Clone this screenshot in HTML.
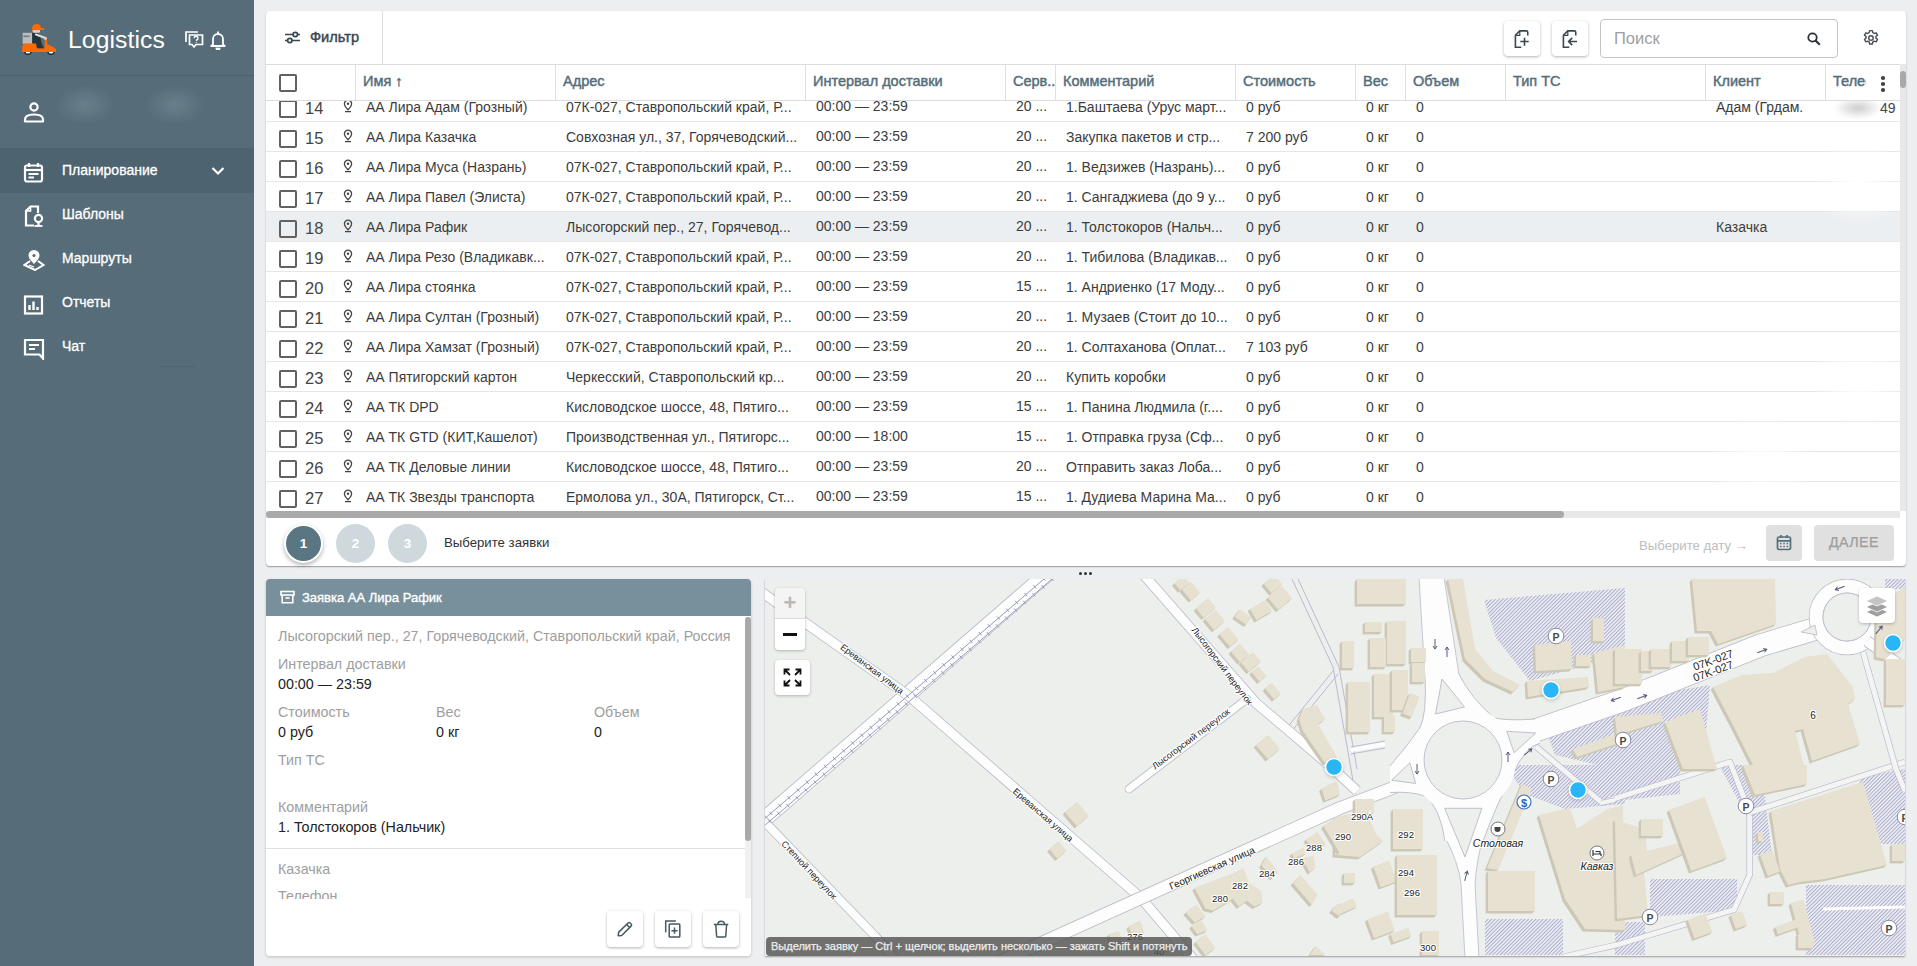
<!DOCTYPE html>
<html><head><meta charset="utf-8"><style>
*{box-sizing:border-box;margin:0;padding:0}
html,body{width:1917px;height:966px;overflow:hidden;background:#eceef0;font-family:"Liberation Sans",sans-serif;color:#333}
.abs{position:absolute}
#side{position:absolute;left:0;top:0;width:254px;height:966px;background:#566d79}
#side .hdr{position:absolute;left:0;top:0;width:254px;height:76px;border-bottom:1px solid #4a5f6a}
#side .logo-t{position:absolute;left:68px;top:26px;font-size:24.7px;color:#fff;letter-spacing:0.1px}
#side .active{position:absolute;left:0;top:148px;width:254px;height:45px;background:#4d636f}
.mi{position:absolute;left:62px;font-size:14px;color:#fff;line-height:16px;-webkit-text-stroke:0.3px #fff}
.mic{position:absolute;left:23px}
#card{position:absolute;left:266px;top:11px;width:1640px;height:555px;background:#fff;border-radius:4px;box-shadow:0 1px 1.5px rgba(0,0,0,.35)}
.toolbar{position:absolute;left:0;top:0;width:1640px;height:54px;border-bottom:1px solid #dcdcdc}
.thead{position:absolute;left:0;top:54px;width:1634px;height:36px;border-bottom:1px solid #dcdcdc;background:#fff;z-index:2}
.vsep{position:absolute;top:0;width:1px;height:36px;background:#e0e0e0}
.th{position:absolute;top:8px;font-size:14.5px;color:#546e7a;white-space:nowrap;-webkit-text-stroke:0.45px #546e7a}
.tbody{position:absolute;left:0;top:89px;width:1634px;height:411px;overflow:hidden}
.tr{position:absolute;left:0;width:1634px;height:30px;border-bottom:1px solid #e6e6e6}
.tr.sel{background:#eceff1}
.cb{position:absolute;width:18px;height:18px;border:2px solid #616161;border-radius:2px}
.num{position:absolute;left:39px;top:7px;font-size:16.5px;color:#444}
.pinw{position:absolute;left:77px;top:7px}
.td{position:absolute;top:7px;font-size:14px;color:#3c3c3c;white-space:nowrap}
.kebab{position:absolute;left:1614px;top:11px;width:6px;height:16px}
.kebab i{display:block;width:3.5px;height:3.5px;border-radius:50%;background:#444;margin:0 0 2.5px 1px}
.blob{position:absolute;border-radius:50%;background:radial-gradient(closest-side,rgba(140,160,170,.35),rgba(86,109,121,0));}
.ibtn{position:absolute;top:10px;width:36px;height:35px;border-radius:4px;background:#fff;box-shadow:0 1px 3px rgba(0,0,0,.3);display:flex;align-items:center;justify-content:center}
.search{position:absolute;left:1334px;top:8px;width:238px;height:39px;border:1px solid #c4c4c4;border-radius:4px}
.step{position:absolute;width:39px;height:39px;border-radius:50%;background:#cfd8dc;color:#fff;font-size:13.5px;font-weight:bold;text-align:center;line-height:39px}
.step.s1{width:35px;height:35px;line-height:35px;background:#5a7683;box-shadow:0 0 0 2px #fff,0 2px 4px 2px rgba(0,0,0,.3)}
.gbtn{position:absolute;top:514px;height:36px;border-radius:4px;background:#e0e0e0}
.dot{position:absolute;top:0;width:3px;height:3px;border-radius:50%;background:#333}
#info{position:absolute;left:266px;top:579px;width:485px;height:377px;background:#fff;border-radius:4px;box-shadow:0 1px 3px rgba(0,0,0,.2)}
.ihdr{position:absolute;left:0;top:0;width:485px;height:37px;background:#78909c;border-radius:4px 4px 0 0}
.ibody{position:absolute;left:0;top:37px;width:485px;height:283px;overflow:hidden}
.il{position:absolute;left:12px;font-size:14.3px;margin-top:1px;color:#9e9e9e;white-space:nowrap}
.iv{position:absolute;left:12px;font-size:14.3px;margin-top:1px;color:#222;white-space:nowrap}
.abtn{position:absolute;top:332px;width:36px;height:36px;border-radius:4px;background:#fff;box-shadow:0 1px 3px rgba(0,0,0,.3);display:flex;align-items:center;justify-content:center}
#map{position:absolute;left:765px;top:579px;width:1140px;height:377px;background:#edefec;overflow:hidden;box-shadow:0 1px 1.5px rgba(0,0,0,.35)}
.mbtn{position:absolute;width:30px;background:#fff;box-shadow:0 1px 3px rgba(0,0,0,.25)}
.hint{position:absolute;left:1px;top:358px;height:19px;padding:0 5px;background:rgba(80,80,80,.8);color:#eee;font-size:11px;line-height:19px;border-radius:4px;white-space:nowrap;-webkit-text-stroke:0.25px #eee}

</style></head><body>
<div id="side">
  <div class="hdr"></div>
  <!-- logo -->
  <svg class="abs" style="left:20px;top:22px" width="38" height="36" viewBox="0 0 38 36">
    <rect x="2.7" y="10.8" width="9.5" height="11" fill="#bdbdbd"/>
    <rect x="3.6" y="13.5" width="6" height="1.6" fill="#7a7a7a"/>
    <path d="M12.2 11 L17 10.6 L20 13 L21.5 21 L24 26.5 L16 26.5 L12.2 21 Z" fill="#23343c"/>
    <path d="M16 12.5 L25.5 16" stroke="#d7dedb" stroke-width="2.2" stroke-linecap="round"/>
    <circle cx="25.5" cy="16.5" r="1.5" fill="#f4c1b8"/>
    <rect x="12.6" y="6.5" width="7.4" height="4.3" rx="1.5" fill="#f4c9c1"/>
    <path d="M12 8.3 Q11.8 2 16.5 2 Q20.5 2 21 6 L24.2 6.3 L24 8 Z" fill="#ff6a00"/>
    <path d="M2 30 L2.3 25 Q3 21.6 6 21.6 L16 21.6 L17 26.5 L24.6 26.5 L24.8 18 L27 17.8 L27.4 22.5 Q33 24 36 27 L36 30 Z" fill="#ff6a00"/>
    <path d="M3.9 30 a4 3.6 0 0 0 7.9 0 Z" fill="#1f2c33"/><path d="M5.6 30 a2.3 1.6 0 0 0 4.6 0 Z" fill="#fff"/>
    <path d="M27.1 30 a4 3.6 0 0 0 7.9 0 Z" fill="#1f2c33"/><path d="M28.8 30 a2.3 1.6 0 0 0 4.6 0 Z" fill="#fff"/>
  </svg>
  <div class="logo-t">Logistics</div>
  <!-- chat question -->
  <svg class="abs" style="left:185px;top:31px" width="19" height="18" viewBox="0 0 19 18" fill="none" stroke="#fff" stroke-width="1.7">
    <path d="M1 11 V1 H13"/>
    <path d="M4.5 4 H17.5 V13.5 H11 L9 16 L7 13.5 H4.5 Z"/>
    <path d="M9.2 7.2 a1.9 1.9 0 1 1 2.4 1.8 v1" stroke-width="1.4"/>
    <circle cx="11.2" cy="11.6" r="0.6" fill="#fff" stroke="none"/>
  </svg>
  <!-- bell -->
  <svg class="abs" style="left:210px;top:30px" width="16" height="20" viewBox="0 0 16 20" fill="none" stroke="#fff" stroke-width="1.8">
    <path d="M3 14.5 V9 a5 5 0 0 1 10 0 V14.5 L14.8 16 H1.2 Z" stroke-linejoin="round"/>
    <path d="M8 1.5 V3.5"/>
    <path d="M6.3 17.8 a1.7 1.7 0 0 0 3.4 0" fill="#fff"/>
  </svg>
  <!-- user -->
  <svg class="abs" style="left:23px;top:102px" width="22" height="21" viewBox="0 0 22 21" fill="none" stroke="#fff" stroke-width="2.2">
    <circle cx="11" cy="5" r="3.6"/>
    <path d="M2 19.5 V17.5 q0 -5 9 -5 q9 0 9 5 V19.5 Z" stroke-linejoin="round"/>
  </svg>
  <div class="blob" style="left:55px;top:85px;width:60px;height:40px"></div>
  <div class="blob" style="left:145px;top:85px;width:60px;height:40px"></div>
  <div class="active"></div>
  <!-- calendar -->
  <svg class="mic" style="top:162px" width="21" height="21" viewBox="0 0 21 21" fill="none" stroke="#fff" stroke-width="2.2">
    <rect x="2" y="3.5" width="17" height="16" rx="2"/>
    <path d="M2 8 H19"/><path d="M6 1 V5 M15 1 V5"/>
    <path d="M5.5 12 H15.5 M5.5 15.5 H11" stroke-width="2"/>
  </svg>
  <div class="mi" style="top:162px">Планирование</div>
  <svg class="abs" style="left:211px;top:166px" width="14" height="10" viewBox="0 0 14 10" fill="none" stroke="#fff" stroke-width="2.2"><path d="M1.5 2 L7 7.5 L12.5 2"/></svg>
  <!-- template -->
  <svg class="mic" style="top:205px" width="22" height="22" viewBox="0 0 22 22" fill="none" stroke="#fff" stroke-width="2.2">
    <path d="M11 20.5 H3 V6 L7.5 1.5 H15 V8"/>
    <path d="M3 6 H7.5 V1.5" stroke-width="1.6"/>
    <circle cx="15.5" cy="13.5" r="3.6"/>
    <path d="M15.5 17 V21"/>
    <path d="M11.5 21 H19.5" stroke-width="1.8"/>
  </svg>
  <div class="mi" style="top:206px">Шаблоны</div>
  <!-- route -->
  <svg class="mic" style="top:250px" width="22" height="21" viewBox="0 0 22 21" fill="none" stroke="#fff" stroke-width="2">
    <path d="M11 12.5 C8 9.5 6.5 7.5 6.5 5.5 a4.5 4.5 0 0 1 9 0 c0 2 -1.5 4 -4.5 7z" fill="#fff"/>
    <circle cx="11" cy="5.5" r="1.6" fill="#566d79" stroke="none"/>
    <path d="M7 11 L1.5 15 L12 20 L20.5 15 L15 11"/>
    <path d="M6 15 L11 17" stroke-width="1.3"/>
  </svg>
  <div class="mi" style="top:250px">Маршруты</div>
  <!-- reports -->
  <svg class="mic" style="top:295px" width="21" height="20" viewBox="0 0 21 20" fill="none" stroke="#fff" stroke-width="2.2">
    <rect x="2" y="1.5" width="17" height="17"/>
    <path d="M6.5 15 V10 M10.5 15 V6.5 M14.5 15 V12" stroke-width="2.4"/>
  </svg>
  <div class="mi" style="top:294px">Отчеты</div>
  <!-- chat -->
  <svg class="mic" style="top:338px" width="22" height="22" viewBox="0 0 22 22" fill="none" stroke="#fff" stroke-width="2.2">
    <path d="M2 2 H20 V20.5 L16.5 16.5 H2 Z" stroke-linejoin="miter"/>
    <path d="M6 7 H16 M6 11 H12" stroke-width="2"/>
  </svg>
  <div class="mi" style="top:338px">Чат</div>
  <div class="abs" style="left:160px;top:366px;width:36px;height:1px;background:#4f6570"></div>
</div>

<div id="card">
  <div class="toolbar">
    <svg class="abs" style="left:18px;top:19px" width="17" height="15" viewBox="0 0 17 15" fill="none" stroke="#37474f" stroke-width="1.7">
      <path d="M1 4.5 H9 M13.5 4.5 H16"/><circle cx="11.3" cy="4.5" r="2.2"/>
      <path d="M1 10.5 H3.5 M8 10.5 H16"/><circle cx="5.8" cy="10.5" r="2.2"/>
    </svg>
    <div class="abs" style="left:44px;top:18px;font-size:14.6px;color:#37474f;-webkit-text-stroke:0.45px #37474f">Фильтр</div>
    <div class="abs" style="left:116px;top:0;width:1px;height:53px;background:#e0e0e0"></div>
    <div class="ibtn" style="left:1238px"><svg width="16" height="18" viewBox="0 0 16 18" fill="none" stroke="#37474f" stroke-width="1.6">
      <path d="M7.3 17.2 H1.4 V5.3 L5.8 0.9 H12.3 Q13.75 0.9 13.75 2.3 V5.4"/><path d="M1.4 5.3 H5.8 V0.9" stroke-width="1.2"/>
      <path d="M10.5 7.8 V15.8 M6.3 11.5 H14.7"/></svg></div>
    <div class="ibtn" style="left:1286px"><svg width="16" height="18" viewBox="0 0 16 18" fill="none" stroke="#37474f" stroke-width="1.6">
      <path d="M7.3 17.2 H1.4 V5.3 L5.8 0.9 H12.3 Q13.75 0.9 13.75 2.3 V5.4"/><path d="M1.4 5.3 H5.8 V0.9" stroke-width="1.2"/>
      <path d="M15 11.5 H6.6 M10.2 7.9 L6.6 11.5 L10.2 15.1"/></svg></div>
    <div class="search">
      <div class="abs" style="left:13px;top:9px;font-size:16.5px;color:#9e9e9e">Поиск</div>
      <svg class="abs" style="left:206px;top:12px" width="14" height="14" viewBox="0 0 14 14" fill="none" stroke="#263238" stroke-width="1.8">
        <circle cx="5.5" cy="5.5" r="4.2"/><path d="M8.5 8.5 L12.8 12.8" stroke-width="2.1"/></svg>
    </div>
    <svg class="abs" style="left:1596px;top:18px" width="18" height="18" viewBox="0 0 24 24" fill="none" stroke="#4a4f55" stroke-width="1.9">
      <path d="M10.2 2.2 h3.6 l.6 2.7 a7.6 7.6 0 0 1 1.9 1.1 l2.6-.9 1.8 3.1-2.1 1.8 a7.6 7.6 0 0 1 0 2.2 l2.1 1.8-1.8 3.1-2.6-.9 a7.6 7.6 0 0 1-1.9 1.1 l-.6 2.7 h-3.6 l-.6-2.7 a7.6 7.6 0 0 1-1.9-1.1 l-2.6.9-1.8-3.1 2.1-1.8 a7.6 7.6 0 0 1 0-2.2 l-2.1-1.8 1.8-3.1 2.6.9 a7.6 7.6 0 0 1 1.9-1.1z" stroke-linejoin="round"/>
      <circle cx="12" cy="12" r="3"/></svg>
  </div>
  <div class="thead">
<div class="cb" style="left:13px;top:9px"></div>
<div class="vsep" style="left:89px"></div>
<div class="th" style="left:97px">Имя ↑</div>
<div class="vsep" style="left:289px"></div>
<div class="th" style="left:297px">Адрес</div>
<div class="vsep" style="left:539px"></div>
<div class="th" style="left:547px">Интервал доставки</div>
<div class="vsep" style="left:739px"></div>
<div class="th" style="left:747px;width:43px;overflow:hidden">Серв...</div>
<div class="vsep" style="left:789px"></div>
<div class="th" style="left:797px">Комментарий</div>
<div class="vsep" style="left:969px"></div>
<div class="th" style="left:977px">Стоимость</div>
<div class="vsep" style="left:1089px"></div>
<div class="th" style="left:1097px">Вес</div>
<div class="vsep" style="left:1139px"></div>
<div class="th" style="left:1147px">Объем</div>
<div class="vsep" style="left:1239px"></div>
<div class="th" style="left:1247px">Тип ТС</div>
<div class="vsep" style="left:1439px"></div>
<div class="th" style="left:1447px">Клиент</div>
<div class="vsep" style="left:1559px"></div>
<div class="th" style="left:1567px;width:33px;overflow:hidden">Телефон</div>
<div class="kebab"><i></i><i></i><i></i></div>
</div>
<div class="tbody">
<div class="tr" style="top:-8px">
<div class="cb" style="left:13px;top:8px"></div>
<div class="num">14</div>
<div class="pinw"><svg class="pin" width="10" height="14" viewBox="0 0 10 14"><path d="M5 1.2a3.6 3.6 0 0 0-3.6 3.6c0 2.3 3.6 6 3.6 6s3.6-3.7 3.6-6A3.6 3.6 0 0 0 5 1.2z" fill="none" stroke="#444" stroke-width="1.3"/><circle cx="5" cy="4.8" r="1.2" fill="#444"/><path d="M2 12.6h6" stroke="#444" stroke-width="1.3"/></svg></div>
<div class="td" style="left:100px">АА Лира Адам (Грозный)</div>
<div class="td" style="left:300px">07К-027, Ставропольский край, Р...</div>
<div class="td" style="left:550px;top:6px">00:00 — 23:59</div>
<div class="td" style="left:750px;top:6px">20 ...</div>
<div class="td" style="left:800px">1.Баштаева (Урус март...</div>
<div class="td" style="left:980px">0 руб</div>
<div class="td" style="left:1100px">0 кг</div>
<div class="td" style="left:1150px">0</div>
<div class="td" style="left:1450px">Адам (Грдам.</div>
</div>
<div class="tr" style="top:22px">
<div class="cb" style="left:13px;top:8px"></div>
<div class="num">15</div>
<div class="pinw"><svg class="pin" width="10" height="14" viewBox="0 0 10 14"><path d="M5 1.2a3.6 3.6 0 0 0-3.6 3.6c0 2.3 3.6 6 3.6 6s3.6-3.7 3.6-6A3.6 3.6 0 0 0 5 1.2z" fill="none" stroke="#444" stroke-width="1.3"/><circle cx="5" cy="4.8" r="1.2" fill="#444"/><path d="M2 12.6h6" stroke="#444" stroke-width="1.3"/></svg></div>
<div class="td" style="left:100px">АА Лира Казачка</div>
<div class="td" style="left:300px">Совхозная ул., 37, Горячеводский...</div>
<div class="td" style="left:550px;top:6px">00:00 — 23:59</div>
<div class="td" style="left:750px;top:6px">20 ...</div>
<div class="td" style="left:800px">Закупка пакетов и стр...</div>
<div class="td" style="left:980px">7 200 руб</div>
<div class="td" style="left:1100px">0 кг</div>
<div class="td" style="left:1150px">0</div>
</div>
<div class="tr" style="top:52px">
<div class="cb" style="left:13px;top:8px"></div>
<div class="num">16</div>
<div class="pinw"><svg class="pin" width="10" height="14" viewBox="0 0 10 14"><path d="M5 1.2a3.6 3.6 0 0 0-3.6 3.6c0 2.3 3.6 6 3.6 6s3.6-3.7 3.6-6A3.6 3.6 0 0 0 5 1.2z" fill="none" stroke="#444" stroke-width="1.3"/><circle cx="5" cy="4.8" r="1.2" fill="#444"/><path d="M2 12.6h6" stroke="#444" stroke-width="1.3"/></svg></div>
<div class="td" style="left:100px">АА Лира Муса (Назрань)</div>
<div class="td" style="left:300px">07К-027, Ставропольский край, Р...</div>
<div class="td" style="left:550px;top:6px">00:00 — 23:59</div>
<div class="td" style="left:750px;top:6px">20 ...</div>
<div class="td" style="left:800px">1. Ведзижев (Назрань)...</div>
<div class="td" style="left:980px">0 руб</div>
<div class="td" style="left:1100px">0 кг</div>
<div class="td" style="left:1150px">0</div>
</div>
<div class="tr" style="top:82px">
<div class="cb" style="left:13px;top:8px"></div>
<div class="num">17</div>
<div class="pinw"><svg class="pin" width="10" height="14" viewBox="0 0 10 14"><path d="M5 1.2a3.6 3.6 0 0 0-3.6 3.6c0 2.3 3.6 6 3.6 6s3.6-3.7 3.6-6A3.6 3.6 0 0 0 5 1.2z" fill="none" stroke="#444" stroke-width="1.3"/><circle cx="5" cy="4.8" r="1.2" fill="#444"/><path d="M2 12.6h6" stroke="#444" stroke-width="1.3"/></svg></div>
<div class="td" style="left:100px">АА Лира Павел (Элиста)</div>
<div class="td" style="left:300px">07К-027, Ставропольский край, Р...</div>
<div class="td" style="left:550px;top:6px">00:00 — 23:59</div>
<div class="td" style="left:750px;top:6px">20 ...</div>
<div class="td" style="left:800px">1. Сангаджиева (до 9 у...</div>
<div class="td" style="left:980px">0 руб</div>
<div class="td" style="left:1100px">0 кг</div>
<div class="td" style="left:1150px">0</div>
</div>
<div class="tr sel" style="top:112px">
<div class="cb" style="left:13px;top:8px"></div>
<div class="num">18</div>
<div class="pinw"><svg class="pin" width="10" height="14" viewBox="0 0 10 14"><path d="M5 1.2a3.6 3.6 0 0 0-3.6 3.6c0 2.3 3.6 6 3.6 6s3.6-3.7 3.6-6A3.6 3.6 0 0 0 5 1.2z" fill="none" stroke="#444" stroke-width="1.3"/><circle cx="5" cy="4.8" r="1.2" fill="#444"/><path d="M2 12.6h6" stroke="#444" stroke-width="1.3"/></svg></div>
<div class="td" style="left:100px">АА Лира Рафик</div>
<div class="td" style="left:300px">Лысогорский пер., 27, Горячевод...</div>
<div class="td" style="left:550px;top:6px">00:00 — 23:59</div>
<div class="td" style="left:750px;top:6px">20 ...</div>
<div class="td" style="left:800px">1. Толстокоров (Нальч...</div>
<div class="td" style="left:980px">0 руб</div>
<div class="td" style="left:1100px">0 кг</div>
<div class="td" style="left:1150px">0</div>
<div class="td" style="left:1450px">Казачка</div>
</div>
<div class="tr" style="top:142px">
<div class="cb" style="left:13px;top:8px"></div>
<div class="num">19</div>
<div class="pinw"><svg class="pin" width="10" height="14" viewBox="0 0 10 14"><path d="M5 1.2a3.6 3.6 0 0 0-3.6 3.6c0 2.3 3.6 6 3.6 6s3.6-3.7 3.6-6A3.6 3.6 0 0 0 5 1.2z" fill="none" stroke="#444" stroke-width="1.3"/><circle cx="5" cy="4.8" r="1.2" fill="#444"/><path d="M2 12.6h6" stroke="#444" stroke-width="1.3"/></svg></div>
<div class="td" style="left:100px">АА Лира Резо (Владикавк...</div>
<div class="td" style="left:300px">07К-027, Ставропольский край, Р...</div>
<div class="td" style="left:550px;top:6px">00:00 — 23:59</div>
<div class="td" style="left:750px;top:6px">20 ...</div>
<div class="td" style="left:800px">1. Тибилова (Владикав...</div>
<div class="td" style="left:980px">0 руб</div>
<div class="td" style="left:1100px">0 кг</div>
<div class="td" style="left:1150px">0</div>
</div>
<div class="tr" style="top:172px">
<div class="cb" style="left:13px;top:8px"></div>
<div class="num">20</div>
<div class="pinw"><svg class="pin" width="10" height="14" viewBox="0 0 10 14"><path d="M5 1.2a3.6 3.6 0 0 0-3.6 3.6c0 2.3 3.6 6 3.6 6s3.6-3.7 3.6-6A3.6 3.6 0 0 0 5 1.2z" fill="none" stroke="#444" stroke-width="1.3"/><circle cx="5" cy="4.8" r="1.2" fill="#444"/><path d="M2 12.6h6" stroke="#444" stroke-width="1.3"/></svg></div>
<div class="td" style="left:100px">АА Лира стоянка</div>
<div class="td" style="left:300px">07К-027, Ставропольский край, Р...</div>
<div class="td" style="left:550px;top:6px">00:00 — 23:59</div>
<div class="td" style="left:750px;top:6px">15 ...</div>
<div class="td" style="left:800px">1. Андриенко (17 Моду...</div>
<div class="td" style="left:980px">0 руб</div>
<div class="td" style="left:1100px">0 кг</div>
<div class="td" style="left:1150px">0</div>
</div>
<div class="tr" style="top:202px">
<div class="cb" style="left:13px;top:8px"></div>
<div class="num">21</div>
<div class="pinw"><svg class="pin" width="10" height="14" viewBox="0 0 10 14"><path d="M5 1.2a3.6 3.6 0 0 0-3.6 3.6c0 2.3 3.6 6 3.6 6s3.6-3.7 3.6-6A3.6 3.6 0 0 0 5 1.2z" fill="none" stroke="#444" stroke-width="1.3"/><circle cx="5" cy="4.8" r="1.2" fill="#444"/><path d="M2 12.6h6" stroke="#444" stroke-width="1.3"/></svg></div>
<div class="td" style="left:100px">АА Лира Султан (Грозный)</div>
<div class="td" style="left:300px">07К-027, Ставропольский край, Р...</div>
<div class="td" style="left:550px;top:6px">00:00 — 23:59</div>
<div class="td" style="left:750px;top:6px">20 ...</div>
<div class="td" style="left:800px">1. Музаев (Стоит до 10...</div>
<div class="td" style="left:980px">0 руб</div>
<div class="td" style="left:1100px">0 кг</div>
<div class="td" style="left:1150px">0</div>
</div>
<div class="tr" style="top:232px">
<div class="cb" style="left:13px;top:8px"></div>
<div class="num">22</div>
<div class="pinw"><svg class="pin" width="10" height="14" viewBox="0 0 10 14"><path d="M5 1.2a3.6 3.6 0 0 0-3.6 3.6c0 2.3 3.6 6 3.6 6s3.6-3.7 3.6-6A3.6 3.6 0 0 0 5 1.2z" fill="none" stroke="#444" stroke-width="1.3"/><circle cx="5" cy="4.8" r="1.2" fill="#444"/><path d="M2 12.6h6" stroke="#444" stroke-width="1.3"/></svg></div>
<div class="td" style="left:100px">АА Лира Хамзат (Грозный)</div>
<div class="td" style="left:300px">07К-027, Ставропольский край, Р...</div>
<div class="td" style="left:550px;top:6px">00:00 — 23:59</div>
<div class="td" style="left:750px;top:6px">20 ...</div>
<div class="td" style="left:800px">1. Солтаханова (Оплат...</div>
<div class="td" style="left:980px">7 103 руб</div>
<div class="td" style="left:1100px">0 кг</div>
<div class="td" style="left:1150px">0</div>
</div>
<div class="tr" style="top:262px">
<div class="cb" style="left:13px;top:8px"></div>
<div class="num">23</div>
<div class="pinw"><svg class="pin" width="10" height="14" viewBox="0 0 10 14"><path d="M5 1.2a3.6 3.6 0 0 0-3.6 3.6c0 2.3 3.6 6 3.6 6s3.6-3.7 3.6-6A3.6 3.6 0 0 0 5 1.2z" fill="none" stroke="#444" stroke-width="1.3"/><circle cx="5" cy="4.8" r="1.2" fill="#444"/><path d="M2 12.6h6" stroke="#444" stroke-width="1.3"/></svg></div>
<div class="td" style="left:100px">АА Пятигорский картон</div>
<div class="td" style="left:300px">Черкесский, Ставропольский кр...</div>
<div class="td" style="left:550px;top:6px">00:00 — 23:59</div>
<div class="td" style="left:750px;top:6px">20 ...</div>
<div class="td" style="left:800px">Купить коробки</div>
<div class="td" style="left:980px">0 руб</div>
<div class="td" style="left:1100px">0 кг</div>
<div class="td" style="left:1150px">0</div>
</div>
<div class="tr" style="top:292px">
<div class="cb" style="left:13px;top:8px"></div>
<div class="num">24</div>
<div class="pinw"><svg class="pin" width="10" height="14" viewBox="0 0 10 14"><path d="M5 1.2a3.6 3.6 0 0 0-3.6 3.6c0 2.3 3.6 6 3.6 6s3.6-3.7 3.6-6A3.6 3.6 0 0 0 5 1.2z" fill="none" stroke="#444" stroke-width="1.3"/><circle cx="5" cy="4.8" r="1.2" fill="#444"/><path d="M2 12.6h6" stroke="#444" stroke-width="1.3"/></svg></div>
<div class="td" style="left:100px">АА ТК DPD</div>
<div class="td" style="left:300px">Кисловодское шоссе, 48, Пятиго...</div>
<div class="td" style="left:550px;top:6px">00:00 — 23:59</div>
<div class="td" style="left:750px;top:6px">15 ...</div>
<div class="td" style="left:800px">1. Панина Людмила (г....</div>
<div class="td" style="left:980px">0 руб</div>
<div class="td" style="left:1100px">0 кг</div>
<div class="td" style="left:1150px">0</div>
</div>
<div class="tr" style="top:322px">
<div class="cb" style="left:13px;top:8px"></div>
<div class="num">25</div>
<div class="pinw"><svg class="pin" width="10" height="14" viewBox="0 0 10 14"><path d="M5 1.2a3.6 3.6 0 0 0-3.6 3.6c0 2.3 3.6 6 3.6 6s3.6-3.7 3.6-6A3.6 3.6 0 0 0 5 1.2z" fill="none" stroke="#444" stroke-width="1.3"/><circle cx="5" cy="4.8" r="1.2" fill="#444"/><path d="M2 12.6h6" stroke="#444" stroke-width="1.3"/></svg></div>
<div class="td" style="left:100px">АА ТК GTD (КИТ,Кашелот)</div>
<div class="td" style="left:300px">Производственная ул., Пятигорс...</div>
<div class="td" style="left:550px;top:6px">00:00 — 18:00</div>
<div class="td" style="left:750px;top:6px">15 ...</div>
<div class="td" style="left:800px">1. Отправка груза (Сф...</div>
<div class="td" style="left:980px">0 руб</div>
<div class="td" style="left:1100px">0 кг</div>
<div class="td" style="left:1150px">0</div>
</div>
<div class="tr" style="top:352px">
<div class="cb" style="left:13px;top:8px"></div>
<div class="num">26</div>
<div class="pinw"><svg class="pin" width="10" height="14" viewBox="0 0 10 14"><path d="M5 1.2a3.6 3.6 0 0 0-3.6 3.6c0 2.3 3.6 6 3.6 6s3.6-3.7 3.6-6A3.6 3.6 0 0 0 5 1.2z" fill="none" stroke="#444" stroke-width="1.3"/><circle cx="5" cy="4.8" r="1.2" fill="#444"/><path d="M2 12.6h6" stroke="#444" stroke-width="1.3"/></svg></div>
<div class="td" style="left:100px">АА ТК Деловые линии</div>
<div class="td" style="left:300px">Кисловодское шоссе, 48, Пятиго...</div>
<div class="td" style="left:550px;top:6px">00:00 — 23:59</div>
<div class="td" style="left:750px;top:6px">20 ...</div>
<div class="td" style="left:800px">Отправить заказ Лоба...</div>
<div class="td" style="left:980px">0 руб</div>
<div class="td" style="left:1100px">0 кг</div>
<div class="td" style="left:1150px">0</div>
</div>
<div class="tr" style="top:382px">
<div class="cb" style="left:13px;top:8px"></div>
<div class="num">27</div>
<div class="pinw"><svg class="pin" width="10" height="14" viewBox="0 0 10 14"><path d="M5 1.2a3.6 3.6 0 0 0-3.6 3.6c0 2.3 3.6 6 3.6 6s3.6-3.7 3.6-6A3.6 3.6 0 0 0 5 1.2z" fill="none" stroke="#444" stroke-width="1.3"/><circle cx="5" cy="4.8" r="1.2" fill="#444"/><path d="M2 12.6h6" stroke="#444" stroke-width="1.3"/></svg></div>
<div class="td" style="left:100px">АА ТК Звезды транспорта</div>
<div class="td" style="left:300px">Ермолова ул., 30А, Пятигорск, Ст...</div>
<div class="td" style="left:550px;top:6px">00:00 — 23:59</div>
<div class="td" style="left:750px;top:6px">15 ...</div>
<div class="td" style="left:800px">1. Дудиева Марина Ма...</div>
<div class="td" style="left:980px">0 руб</div>
<div class="td" style="left:1100px">0 кг</div>
<div class="td" style="left:1150px">0</div>
</div>
</div>

  <div class="abs" style="left:1568px;top:86px;width:48px;height:22px;border-radius:50%;background:radial-gradient(closest-side,rgba(110,110,110,.35),rgba(255,255,255,0));filter:blur(1.5px)"></div>
  <div class="abs" style="left:1614px;top:89px;font-size:14px;color:#444">49</div>
  <div class="abs" style="left:1545px;top:125px;width:95px;height:90px;border-radius:50%;background:radial-gradient(closest-side,rgba(255,255,255,1),rgba(255,255,255,0))"></div>
  <div class="abs" style="left:1545px;top:320px;width:95px;height:100px;border-radius:50%;background:radial-gradient(closest-side,rgba(255,255,255,1),rgba(255,255,255,0))"></div>
  <div class="abs" style="left:1440px;top:400px;width:110px;height:100px;border-radius:50%;background:radial-gradient(closest-side,rgba(255,255,255,.9),rgba(255,255,255,0))"></div>
  <!-- scrollbars -->
  <div class="abs" style="left:0;top:500px;width:1634px;height:7px;background:#e8e8e8"></div>
  <div class="abs" style="left:0;top:500px;width:1298px;height:7px;background:#a9a9a9;border-radius:4px"></div>
  <div class="abs" style="left:1634px;top:53px;width:6px;height:447px;background:#e8e8e8"></div>
  <div class="abs" style="left:1634px;top:60px;width:6px;height:17px;background:#a9a9a9;border-radius:3px"></div>
  <!-- steps -->
  <div class="step s1" style="left:20px;top:515px">1</div>
  <div class="step" style="left:70px;top:513px">2</div>
  <div class="step" style="left:122px;top:513px">3</div>
  <div class="abs" style="left:178px;top:524px;font-size:13.2px;color:#333">Выберите заявки</div>
  <div class="abs" style="left:1373px;top:527px;font-size:13.2px;color:#bdbdbd">Выберите дату →</div>
  <div class="gbtn" style="left:1500px;width:36px">
    <svg class="abs" style="left:10px;top:9px" width="16" height="17" viewBox="0 0 16 17" fill="none" stroke="#546e7a" stroke-width="1.7">
      <rect x="1.5" y="3" width="13" height="12.5" rx="1.5"/><path d="M1.5 6.8 H14.5 M5 1 V4 M11 1 V4"/>
      <path d="M4 9.5 h1.5 M7.3 9.5 h1.5 M10.6 9.5 h1.5 M4 12.5 h1.5 M7.3 12.5 h1.5 M10.6 12.5 h1.5" stroke-width="1.4"/></svg>
  </div>
  <div class="gbtn" style="left:1548px;width:80px;text-align:center;line-height:34px;font-size:14.3px;color:#9e9e9e;letter-spacing:0.4px;-webkit-text-stroke:0.25px #9e9e9e">ДАЛЕЕ</div>
</div>

<div class="abs" style="left:1079px;top:572px;width:14px;height:3px">
  <i class="dot" style="left:0"></i><i class="dot" style="left:5px"></i><i class="dot" style="left:10px"></i>
</div>

<div id="info">
  <div class="ihdr">
    <svg class="abs" style="left:14px;top:11px" width="15" height="14" viewBox="0 0 15 14" fill="none" stroke="#fff" stroke-width="1.6">
      <rect x="1" y="1.5" width="13" height="3.5"/><path d="M2.2 5 V12.8 H12.8 V5"/><path d="M5.5 8 H9.5"/></svg>
    <div class="abs" style="left:36px;top:11px;font-size:13px;color:#fff;-webkit-text-stroke:0.35px #fff">Заявка АА Лира Рафик</div>
  </div>
  <div class="ibody">
    <div class="il" style="top:11px">Лысогорский пер., 27, Горячеводский, Ставропольский край, Россия</div>
    <div class="il" style="top:39px">Интервал доставки</div>
    <div class="iv" style="top:59px">00:00 — 23:59</div>
    <div class="il" style="top:87px">Стоимость</div>
    <div class="iv" style="top:107px">0 руб</div>
    <div class="il" style="top:87px;left:170px">Вес</div>
    <div class="iv" style="top:107px;left:170px">0 кг</div>
    <div class="il" style="top:87px;left:328px">Объем</div>
    <div class="iv" style="top:107px;left:328px">0</div>
    <div class="il" style="top:135px">Тип ТС</div>
    <div class="il" style="top:182px">Комментарий</div>
    <div class="iv" style="top:202px">1. Толстокоров (Нальчик)</div>
    <div class="abs" style="left:0;top:232px;width:479px;height:1px;background:#e0e0e0"></div>
    <div class="il" style="top:244px">Казачка</div>
    <div class="il" style="top:271px">Телефон</div>
    <div class="abs" style="left:479px;top:1px;width:6px;height:281px;background:#f0f0f0"></div>
    <div class="abs" style="left:479px;top:1px;width:6px;height:224px;background:#a9a9a9;border-radius:3px"></div>
  </div>
  <div class="abtn" style="left:341px"><svg width="18" height="18" viewBox="0 0 18 18" fill="none" stroke="#455a64" stroke-width="1.5" stroke-linejoin="round"><path d="M2.2 15.8 L2.6 12.4 L12 3 a1.5 1.5 0 0 1 2.1 0 L15.1 4 a1.5 1.5 0 0 1 0 2.1 L5.7 15.5 Z"/><path d="M10.6 4.4 L13.7 7.5"/></svg></div>
  <div class="abtn" style="left:389px"><svg width="18" height="18" viewBox="0 0 18 18" fill="none" stroke="#455a64" stroke-width="1.5"><path d="M1.7 12.3 V1 H11.9"/><rect x="5.2" y="4.1" width="10.6" height="13" rx="0.8"/><path d="M10.5 7.6 V13.8 M7.4 10.7 H13.6"/></svg></div>
  <div class="abtn" style="left:437px"><svg width="18" height="18" viewBox="0 0 18 18" fill="none" stroke="#455a64" stroke-width="1.5" stroke-linejoin="round"><path d="M1.8 4.5 H16.3"/><path d="M6 4.5 V3.6 a3.2 2.4 0 0 1 6.4 0 V4.5"/><path d="M3.8 4.5 L4.6 15.9 a1.3 1.3 0 0 0 1.3 1.2 H12.5 a1.3 1.3 0 0 0 1.3 -1.2 L14.6 4.5"/></svg></div>
</div>

<div id="map"><svg width="1140" height="377" viewBox="0 0 1140 377" style="position:absolute;left:0;top:0;font-family:Liberation Sans,sans-serif">
<defs><pattern id="hatch" width="2.6" height="2.6" patternUnits="userSpaceOnUse" patternTransform="rotate(-45)"><rect width="2.6" height="2.6" fill="#eaebf2"/><rect width="2.6" height="0.75" fill="#9c9fc2"/></pattern><filter id="blur"><feGaussianBlur stdDeviation="1.5"/></filter></defs>
<rect width="1140" height="377" fill="#edefec"/>
<polygon points="719.0,21.0 860.0,9.0 860.0,75.0 765.0,102.0 731.0,59.0" fill="url(#hatch)"/>
<polygon points="850.0,12.0 860.0,12.0 860.0,75.0 850.0,75.0" fill="url(#hatch)"/>
<polygon points="777.0,140.0 860.0,120.0 945.0,106.0 938.0,190.0 850.0,190.0 790.0,176.0" fill="url(#hatch)"/>
<polygon points="850.0,186.0 915.0,186.0 915.0,215.0 850.0,222.0" fill="url(#hatch)"/>
<polygon points="954.0,186.0 996.0,186.0 1007.0,276.0 988.0,276.0 985.0,243.0" fill="url(#hatch)"/>
<polygon points="885.0,300.0 972.0,300.0 972.0,331.0 885.0,338.0" fill="url(#hatch)"/>
<polygon points="850.0,343.0 880.0,343.0 880.0,376.0 850.0,376.0" fill="url(#hatch)"/>
<polygon points="1094.0,198.0 1140.0,190.0 1140.0,265.0 1100.0,265.0" fill="url(#hatch)"/>
<polygon points="1041.0,306.0 1140.0,306.0 1140.0,376.0 1041.0,376.0" fill="url(#hatch)"/>
<polygon points="740.0,186.0 860.0,186.0 860.0,225.0 800.0,230.0 760.0,215.0" fill="url(#hatch)"/>
<polygon points="720.0,340.0 798.0,340.0 798.0,376.0 720.0,376.0" fill="url(#hatch)"/>
<polygon points="1120.0,0.0 1140.0,0.0 1140.0,10.0 1120.0,10.0" fill="url(#hatch)"/>
<path d="M527.0,0.0 L568.0,88.0 L586.0,190.0 L590.0,215.0" fill="none" stroke="#b9bad0" stroke-width="1"/>
<path d="M533.0,0.0 L574.0,88.0 L592.0,190.0" fill="none" stroke="#b9bad0" stroke-width="1"/>
<path d="M568.0,92.0 L521.0,150.0" fill="none" stroke="#b9bad0" stroke-width="1"/>
<path d="M573.0,95.0 L526.0,153.0" fill="none" stroke="#b9bad0" stroke-width="1"/>
<path d="M586.0,168.0 L620.0,162.0" fill="none" stroke="#b9bad0" stroke-width="1"/>
<path d="M586.0,175.0 L620.0,169.0" fill="none" stroke="#b9bad0" stroke-width="1"/>
<path d="M770.7,167.3 L836.8,223.7 L965.0,183.0 L984.7,233.5 L984.7,295.7 L969.0,330.7 L852.0,365.8 L798.0,378.0" fill="none" stroke="#babbd0" stroke-width="6.4" stroke-linejoin="round"/>
<path d="M770.7,167.3 L836.8,223.7 L965.0,183.0 L984.7,233.5 L984.7,295.7 L969.0,330.7 L852.0,365.8 L798.0,378.0" fill="none" stroke="#f4f4f2" stroke-width="5" stroke-linejoin="round"/>
<path d="M984.7,233.5 L1140.0,183.0" fill="none" stroke="#babbd0" stroke-width="6.4" stroke-linejoin="round"/>
<path d="M984.7,233.5 L1140.0,183.0" fill="none" stroke="#f4f4f2" stroke-width="5" stroke-linejoin="round"/>
<path d="M1098.0,73.0 L1131.0,190.0 L1140.0,212.0" fill="none" stroke="#babbd0" stroke-width="6.4" stroke-linejoin="round"/>
<path d="M1098.0,73.0 L1131.0,190.0 L1140.0,212.0" fill="none" stroke="#f4f4f2" stroke-width="5" stroke-linejoin="round"/>
<path d="M850.0,221.0 L836.8,223.7" fill="none" stroke="#babbd0" stroke-width="5.4" stroke-linejoin="round"/>
<path d="M850.0,221.0 L836.8,223.7" fill="none" stroke="#f4f4f2" stroke-width="4" stroke-linejoin="round"/>
<path d="M1058.0,330.0 L1140.0,328.0" fill="none" stroke="#fdfdfd" stroke-width="3" stroke-linejoin="round"/>
<path d="M586.0,171.0 L620.0,165.0" fill="none" stroke="#fdfdfd" stroke-width="4" stroke-linejoin="round"/>
<path d="M290.0,-12.0 L-12.0,250.0" fill="none" stroke="#b9bac8" stroke-width="16.6" stroke-linejoin="round"/>
<path d="M290.0,-12.0 L-12.0,250.0" fill="none" stroke="#fdfdfd" stroke-width="15" stroke-linejoin="round"/>
<path d="M-5.0,12.0 L144.0,117.0 L376.0,319.0 L428.0,380.0" fill="none" stroke="#b9bac8" stroke-width="10.6" stroke-linejoin="round"/>
<path d="M-5.0,12.0 L144.0,117.0 L376.0,319.0 L428.0,380.0" fill="none" stroke="#fdfdfd" stroke-width="9" stroke-linejoin="round"/>
<path d="M-5.0,238.0 L110.0,357.0 L130.0,380.0" fill="none" stroke="#b9bac8" stroke-width="9.6" stroke-linejoin="round"/>
<path d="M-5.0,238.0 L110.0,357.0 L130.0,380.0" fill="none" stroke="#fdfdfd" stroke-width="8" stroke-linejoin="round"/>
<path d="M378.0,-5.0 L491.0,124.0 L564.0,186.0 L592.0,212.0" fill="none" stroke="#b9bac8" stroke-width="10.6" stroke-linejoin="round"/>
<path d="M378.0,-5.0 L491.0,124.0 L564.0,186.0 L592.0,212.0" fill="none" stroke="#fdfdfd" stroke-width="9" stroke-linejoin="round"/>
<path d="M364,210 L482,120" stroke="#b9bac8" stroke-width="8.6" stroke-linecap="round"/>
<path d="M364,210 L482,120" stroke="#fdfdfd" stroke-width="7" stroke-linecap="round"/>
<path d="M230.0,385.0 L575.0,229.0 L620.0,212.0 L655.0,198.0" fill="none" stroke="#b9bac8" stroke-width="13.6" stroke-linejoin="round"/>
<path d="M230.0,385.0 L575.0,229.0 L620.0,212.0 L655.0,198.0" fill="none" stroke="#fdfdfd" stroke-width="12" stroke-linejoin="round"/>
<path d="M680,258 Q694,285 696,305 L700,380 L714,380 L710,305 Q711,285 718,258 Z" fill="#fdfdfd" stroke="#b9bac8" stroke-width="0.8"/>
<path d="M654,-2 L660,99 L694,96 L679,-2 Z" fill="#fdfdfd" stroke="#b9bac8" stroke-width="0.8"/>
<path d="M700.0,172.0 L766.0,153.0 L860.0,120.5 L995.0,66.5 L1050.0,50.0 L1085.0,30.0" fill="none" stroke="#b9bac8" stroke-width="23.6" stroke-linejoin="round"/>
<path d="M700.0,172.0 L766.0,153.0 L860.0,120.5 L995.0,66.5 L1050.0,50.0 L1085.0,30.0" fill="none" stroke="#fdfdfd" stroke-width="22" stroke-linejoin="round"/>
<path d="M660,98 Q662,135 654.8,149 Q640,170 625,187 L625,213.6 Q645,212 659.8,217 Q675,228 680,262 L718,262 Q733,222 747.6,195.4 Q760,168 775,164 L770,140 Q745,142 729,139 Q705,118 694,95 Z" fill="#fdfdfd"/>
<path d="M660,98 Q662,135 654.8,149 Q640,170 625,187" fill="none" stroke="#b9bac8" stroke-width="0.9"/>
<path d="M625,213.6 Q645,212 659.8,217 Q675,228 680,262" fill="none" stroke="#b9bac8" stroke-width="0.9"/>
<path d="M718,262 Q733,222 747.6,195.4 Q760,168 775,164" fill="none" stroke="#b9bac8" stroke-width="0.9"/>
<path d="M770,140 Q745,142 729,139 Q705,118 694,95" fill="none" stroke="#b9bac8" stroke-width="0.9"/>
<circle cx="698" cy="181" r="46" fill="none" stroke="#fdfdfd" stroke-width="14"/>
<circle cx="698" cy="181" r="39" fill="#edefec" stroke="#b9bac8" stroke-width="0.9"/>
<polygon points="670.5,135 699.5,128 677,100" fill="#edefec" stroke="#b9bac8" stroke-width="0.9"/>
<polygon points="679.6,229.3 716.9,229.3 700,278" fill="#edefec" stroke="#b9bac8" stroke-width="0.9"/>
<polygon points="741.7,152.3 770.7,154 749.2,173.8" fill="#edefec" stroke="#b9bac8" stroke-width="0.9"/>
<polygon points="626.7,201.2 650.7,204.5 644.9,183.8" fill="#edefec" stroke="#b9bac8" stroke-width="0.9"/>
<circle cx="1082" cy="38" r="31" fill="none" stroke="#b9bac8" stroke-width="14.5"/>
<circle cx="1082" cy="38" r="31" fill="none" stroke="#fdfdfd" stroke-width="13"/>
<circle cx="1082" cy="38" r="24" fill="#edefec" stroke="#b9bac8" stroke-width="0.8"/>
<path d="M1102.0,62.0 L1140.0,90.0" fill="none" stroke="#b9bac8" stroke-width="11.6" stroke-linejoin="round"/>
<path d="M1102.0,62.0 L1140.0,90.0" fill="none" stroke="#fdfdfd" stroke-width="10" stroke-linejoin="round"/>
<polygon points="1036,53 1050,46 1052,56" fill="#edefec" stroke="#b9bac8" stroke-width="0.8"/>
<path d="M294.2,-13.0 L-24.6,260.4" stroke="#8c8eb8" stroke-width="0.9"/>
<path d="M295.8,-17.3 L298.6,-14.0" stroke="#8c8eb8" stroke-width="0.9"/>
<path d="M286.7,-9.5 L289.5,-6.1" stroke="#8c8eb8" stroke-width="0.9"/>
<path d="M277.6,-1.7 L280.4,1.7" stroke="#8c8eb8" stroke-width="0.9"/>
<path d="M268.5,6.1 L271.3,9.5" stroke="#8c8eb8" stroke-width="0.9"/>
<path d="M259.4,14.0 L262.2,17.3" stroke="#8c8eb8" stroke-width="0.9"/>
<path d="M250.2,21.8 L253.1,25.1" stroke="#8c8eb8" stroke-width="0.9"/>
<path d="M241.1,29.6 L244.0,32.9" stroke="#8c8eb8" stroke-width="0.9"/>
<path d="M232.0,37.4 L234.9,40.7" stroke="#8c8eb8" stroke-width="0.9"/>
<path d="M222.9,45.2 L225.8,48.5" stroke="#8c8eb8" stroke-width="0.9"/>
<path d="M213.8,53.0 L216.7,56.4" stroke="#8c8eb8" stroke-width="0.9"/>
<path d="M204.7,60.8 L207.6,64.2" stroke="#8c8eb8" stroke-width="0.9"/>
<path d="M195.6,68.6 L198.5,72.0" stroke="#8c8eb8" stroke-width="0.9"/>
<path d="M186.5,76.5 L189.3,79.8" stroke="#8c8eb8" stroke-width="0.9"/>
<path d="M177.4,84.3 L180.2,87.6" stroke="#8c8eb8" stroke-width="0.9"/>
<path d="M168.3,92.1 L171.1,95.4" stroke="#8c8eb8" stroke-width="0.9"/>
<path d="M159.2,99.9 L162.0,103.2" stroke="#8c8eb8" stroke-width="0.9"/>
<path d="M150.0,107.7 L152.9,111.0" stroke="#8c8eb8" stroke-width="0.9"/>
<path d="M140.9,115.5 L143.8,118.9" stroke="#8c8eb8" stroke-width="0.9"/>
<path d="M131.8,123.3 L134.7,126.7" stroke="#8c8eb8" stroke-width="0.9"/>
<path d="M122.7,131.1 L125.6,134.5" stroke="#8c8eb8" stroke-width="0.9"/>
<path d="M113.6,138.9 L116.5,142.3" stroke="#8c8eb8" stroke-width="0.9"/>
<path d="M104.5,146.8 L107.4,150.1" stroke="#8c8eb8" stroke-width="0.9"/>
<path d="M95.4,154.6 L98.3,157.9" stroke="#8c8eb8" stroke-width="0.9"/>
<path d="M86.3,162.4 L89.1,165.7" stroke="#8c8eb8" stroke-width="0.9"/>
<path d="M77.2,170.2 L80.0,173.5" stroke="#8c8eb8" stroke-width="0.9"/>
<path d="M68.1,178.0 L70.9,181.3" stroke="#8c8eb8" stroke-width="0.9"/>
<path d="M59.0,185.8 L61.8,189.2" stroke="#8c8eb8" stroke-width="0.9"/>
<path d="M49.8,193.6 L52.7,197.0" stroke="#8c8eb8" stroke-width="0.9"/>
<path d="M40.7,201.4 L43.6,204.8" stroke="#8c8eb8" stroke-width="0.9"/>
<path d="M31.6,209.3 L34.5,212.6" stroke="#8c8eb8" stroke-width="0.9"/>
<path d="M22.5,217.1 L25.4,220.4" stroke="#8c8eb8" stroke-width="0.9"/>
<path d="M13.4,224.9 L16.3,228.2" stroke="#8c8eb8" stroke-width="0.9"/>
<path d="M4.3,232.7 L7.2,236.0" stroke="#8c8eb8" stroke-width="0.9"/>
<path d="M-4.8,240.5 L-1.9,243.8" stroke="#8c8eb8" stroke-width="0.9"/>
<path d="M-13.9,248.3 L-11.1,251.7" stroke="#8c8eb8" stroke-width="0.9"/>
<path d="M-23.0,256.1 L-20.2,259.5" stroke="#8c8eb8" stroke-width="0.9"/>
<path d="M-32.1,263.9 L-29.3,267.3" stroke="#8c8eb8" stroke-width="0.9"/>
<path d="M-41.2,271.8 L-38.4,275.1" stroke="#8c8eb8" stroke-width="0.9"/>
<path d="M302.2,-13.0 L-16.6,260.4" stroke="#8c8eb8" stroke-width="0.9"/>
<path d="M303.8,-17.3 L306.6,-14.0" stroke="#8c8eb8" stroke-width="0.9"/>
<path d="M294.7,-9.5 L297.5,-6.1" stroke="#8c8eb8" stroke-width="0.9"/>
<path d="M285.6,-1.7 L288.4,1.7" stroke="#8c8eb8" stroke-width="0.9"/>
<path d="M276.5,6.1 L279.3,9.5" stroke="#8c8eb8" stroke-width="0.9"/>
<path d="M267.4,14.0 L270.2,17.3" stroke="#8c8eb8" stroke-width="0.9"/>
<path d="M258.2,21.8 L261.1,25.1" stroke="#8c8eb8" stroke-width="0.9"/>
<path d="M249.1,29.6 L252.0,32.9" stroke="#8c8eb8" stroke-width="0.9"/>
<path d="M240.0,37.4 L242.9,40.7" stroke="#8c8eb8" stroke-width="0.9"/>
<path d="M230.9,45.2 L233.8,48.5" stroke="#8c8eb8" stroke-width="0.9"/>
<path d="M221.8,53.0 L224.7,56.4" stroke="#8c8eb8" stroke-width="0.9"/>
<path d="M212.7,60.8 L215.6,64.2" stroke="#8c8eb8" stroke-width="0.9"/>
<path d="M203.6,68.6 L206.5,72.0" stroke="#8c8eb8" stroke-width="0.9"/>
<path d="M194.5,76.5 L197.3,79.8" stroke="#8c8eb8" stroke-width="0.9"/>
<path d="M185.4,84.3 L188.2,87.6" stroke="#8c8eb8" stroke-width="0.9"/>
<path d="M176.3,92.1 L179.1,95.4" stroke="#8c8eb8" stroke-width="0.9"/>
<path d="M167.2,99.9 L170.0,103.2" stroke="#8c8eb8" stroke-width="0.9"/>
<path d="M158.0,107.7 L160.9,111.0" stroke="#8c8eb8" stroke-width="0.9"/>
<path d="M148.9,115.5 L151.8,118.9" stroke="#8c8eb8" stroke-width="0.9"/>
<path d="M139.8,123.3 L142.7,126.7" stroke="#8c8eb8" stroke-width="0.9"/>
<path d="M130.7,131.1 L133.6,134.5" stroke="#8c8eb8" stroke-width="0.9"/>
<path d="M121.6,138.9 L124.5,142.3" stroke="#8c8eb8" stroke-width="0.9"/>
<path d="M112.5,146.8 L115.4,150.1" stroke="#8c8eb8" stroke-width="0.9"/>
<path d="M103.4,154.6 L106.3,157.9" stroke="#8c8eb8" stroke-width="0.9"/>
<path d="M94.3,162.4 L97.1,165.7" stroke="#8c8eb8" stroke-width="0.9"/>
<path d="M85.2,170.2 L88.0,173.5" stroke="#8c8eb8" stroke-width="0.9"/>
<path d="M76.1,178.0 L78.9,181.3" stroke="#8c8eb8" stroke-width="0.9"/>
<path d="M67.0,185.8 L69.8,189.2" stroke="#8c8eb8" stroke-width="0.9"/>
<path d="M57.8,193.6 L60.7,197.0" stroke="#8c8eb8" stroke-width="0.9"/>
<path d="M48.7,201.4 L51.6,204.8" stroke="#8c8eb8" stroke-width="0.9"/>
<path d="M39.6,209.3 L42.5,212.6" stroke="#8c8eb8" stroke-width="0.9"/>
<path d="M30.5,217.1 L33.4,220.4" stroke="#8c8eb8" stroke-width="0.9"/>
<path d="M21.4,224.9 L24.3,228.2" stroke="#8c8eb8" stroke-width="0.9"/>
<path d="M12.3,232.7 L15.2,236.0" stroke="#8c8eb8" stroke-width="0.9"/>
<path d="M3.2,240.5 L6.1,243.8" stroke="#8c8eb8" stroke-width="0.9"/>
<path d="M-5.9,248.3 L-3.1,251.7" stroke="#8c8eb8" stroke-width="0.9"/>
<path d="M-15.0,256.1 L-12.2,259.5" stroke="#8c8eb8" stroke-width="0.9"/>
<path d="M-24.1,263.9 L-21.3,267.3" stroke="#8c8eb8" stroke-width="0.9"/>
<path d="M-33.2,271.8 L-30.4,275.1" stroke="#8c8eb8" stroke-width="0.9"/>
<polygon points="407.1,6.8 416.3,-0.9 422.1,6.0 412.9,13.7" fill="#cdc8b6"/>
<polygon points="407.9,6.0 417.1,-1.7 422.9,5.2 413.7,12.9" fill="#cdc8b6"/>
<polygon points="408.7,5.2 417.9,-2.5 423.7,4.4 414.5,12.1" fill="#cdc8b6"/>
<polygon points="409.5,4.4 418.7,-3.3 424.5,3.6 415.3,11.3" fill="#e6e1d1"/>
<polygon points="414.5,12.9 423.7,5.2 432.7,15.9 423.5,23.6" fill="#cdc8b6"/>
<polygon points="415.3,12.1 424.5,4.4 433.5,15.1 424.3,22.8" fill="#cdc8b6"/>
<polygon points="416.1,11.3 425.3,3.6 434.3,14.3 425.1,22.0" fill="#cdc8b6"/>
<polygon points="416.9,10.5 426.1,2.8 435.1,13.5 425.9,21.2" fill="#e6e1d1"/>
<polygon points="428.6,31.9 440.9,21.7 448.6,30.9 436.3,41.1" fill="#cdc8b6"/>
<polygon points="429.4,31.1 441.7,20.9 449.4,30.1 437.1,40.3" fill="#cdc8b6"/>
<polygon points="430.2,30.3 442.5,20.1 450.2,29.3 437.9,39.5" fill="#cdc8b6"/>
<polygon points="431.0,29.5 443.3,19.3 451.0,28.5 438.7,38.7" fill="#e6e1d1"/>
<polygon points="437.7,42.5 448.5,33.5 457.5,44.3 446.7,53.3" fill="#cdc8b6"/>
<polygon points="438.5,41.7 449.3,32.7 458.3,43.5 447.5,52.5" fill="#cdc8b6"/>
<polygon points="439.3,40.9 450.1,31.9 459.1,42.7 448.3,51.7" fill="#cdc8b6"/>
<polygon points="440.1,40.1 450.9,31.1 459.9,41.9 449.1,50.9" fill="#e6e1d1"/>
<polygon points="452.2,57.8 460.7,50.7 471.0,63.0 462.5,70.1" fill="#cdc8b6"/>
<polygon points="453.0,57.0 461.5,49.9 471.8,62.2 463.3,69.3" fill="#cdc8b6"/>
<polygon points="453.8,56.2 462.3,49.1 472.6,61.4 464.1,68.5" fill="#cdc8b6"/>
<polygon points="454.6,55.4 463.1,48.3 473.4,60.6 464.9,67.7" fill="#e6e1d1"/>
<polygon points="463.5,74.9 472.7,67.2 481.7,77.9 472.5,85.6" fill="#cdc8b6"/>
<polygon points="464.3,74.1 473.5,66.4 482.5,77.1 473.3,84.8" fill="#cdc8b6"/>
<polygon points="465.1,73.3 474.3,65.6 483.3,76.3 474.1,84.0" fill="#cdc8b6"/>
<polygon points="465.9,72.5 475.1,64.8 484.1,75.5 474.9,83.2" fill="#e6e1d1"/>
<polygon points="473.6,85.9 485.9,75.7 493.6,84.9 481.3,95.1" fill="#cdc8b6"/>
<polygon points="474.4,85.1 486.7,74.9 494.4,84.1 482.1,94.3" fill="#cdc8b6"/>
<polygon points="475.2,84.3 487.5,74.1 495.2,83.3 482.9,93.5" fill="#cdc8b6"/>
<polygon points="476.0,83.5 488.3,73.3 496.0,82.5 483.7,92.7" fill="#e6e1d1"/>
<polygon points="484.3,95.7 491.2,89.9 498.9,99.1 492.0,104.9" fill="#cdc8b6"/>
<polygon points="485.1,94.9 492.0,89.1 499.7,98.3 492.8,104.1" fill="#cdc8b6"/>
<polygon points="485.9,94.1 492.8,88.3 500.5,97.5 493.6,103.3" fill="#cdc8b6"/>
<polygon points="486.7,93.3 493.6,87.5 501.3,96.7 494.4,102.5" fill="#e6e1d1"/>
<polygon points="497.7,111.9 504.5,106.1 513.5,116.9 506.7,122.7" fill="#cdc8b6"/>
<polygon points="498.5,111.1 505.3,105.3 514.3,116.1 507.5,121.9" fill="#cdc8b6"/>
<polygon points="499.3,110.3 506.1,104.5 515.1,115.3 508.3,121.1" fill="#cdc8b6"/>
<polygon points="500.1,109.5 506.9,103.7 515.9,114.5 509.1,120.3" fill="#e6e1d1"/>
<polygon points="467.3,40.1 472.4,32.7 483.9,40.7 478.8,48.1" fill="#cdc8b6"/>
<polygon points="468.1,39.3 473.2,31.9 484.7,39.9 479.6,47.3" fill="#cdc8b6"/>
<polygon points="468.9,38.5 474.0,31.1 485.5,39.1 480.4,46.5" fill="#cdc8b6"/>
<polygon points="469.7,37.7 474.8,30.3 486.3,38.3 481.2,45.7" fill="#e6e1d1"/>
<polygon points="482.6,32.3 498.1,23.3 504.6,34.5 489.1,43.5" fill="#cdc8b6"/>
<polygon points="483.4,31.5 498.9,22.5 505.4,33.7 489.9,42.7" fill="#cdc8b6"/>
<polygon points="484.2,30.7 499.7,21.7 506.2,32.9 490.7,41.9" fill="#cdc8b6"/>
<polygon points="485.0,29.9 500.5,20.9 507.0,32.1 491.5,41.1" fill="#e6e1d1"/>
<polygon points="500.6,21.1 514.4,9.5 524.6,21.7 510.8,33.3" fill="#cdc8b6"/>
<polygon points="501.4,20.3 515.2,8.7 525.4,20.9 511.6,32.5" fill="#cdc8b6"/>
<polygon points="502.2,19.5 516.0,7.9 526.2,20.1 512.4,31.7" fill="#cdc8b6"/>
<polygon points="503.0,18.7 516.8,7.1 527.0,19.3 513.2,30.9" fill="#e6e1d1"/>
<polygon points="496.4,7.3 507.1,-1.7 514.8,7.5 504.1,16.5" fill="#cdc8b6"/>
<polygon points="497.2,6.5 507.9,-2.5 515.6,6.7 504.9,15.7" fill="#cdc8b6"/>
<polygon points="498.0,5.7 508.7,-3.3 516.4,5.9 505.7,14.9" fill="#cdc8b6"/>
<polygon points="498.8,4.9 509.5,-4.1 517.2,5.1 506.5,14.1" fill="#e6e1d1"/>
<polygon points="488.7,168.6 500.9,158.4 512.5,172.2 500.3,182.4" fill="#cdc8b6"/>
<polygon points="489.5,167.8 501.7,157.6 513.3,171.4 501.1,181.6" fill="#cdc8b6"/>
<polygon points="490.3,167.0 502.5,156.8 514.1,170.6 501.9,180.8" fill="#cdc8b6"/>
<polygon points="491.1,166.2 503.3,156.0 514.9,169.8 502.7,180.0" fill="#e6e1d1"/>
<polygon points="297.7,235.6 309.9,225.4 321.5,239.2 309.3,249.4" fill="#cdc8b6"/>
<polygon points="298.5,234.8 310.7,224.6 322.3,238.4 310.1,248.6" fill="#cdc8b6"/>
<polygon points="299.3,234.0 311.5,223.8 323.1,237.6 310.9,247.8" fill="#cdc8b6"/>
<polygon points="300.1,233.2 312.3,223.0 323.9,236.8 311.7,247.0" fill="#e6e1d1"/>
<polygon points="282.1,272.7 291.3,264.9 299.1,274.1 289.9,281.9" fill="#cdc8b6"/>
<polygon points="282.9,271.9 292.1,264.1 299.9,273.3 290.7,281.1" fill="#cdc8b6"/>
<polygon points="283.7,271.1 292.9,263.3 300.7,272.5 291.5,280.3" fill="#cdc8b6"/>
<polygon points="284.5,270.3 293.7,262.5 301.5,271.7 292.3,279.5" fill="#e6e1d1"/>
<polygon points="535.6,132.4 549.6,128.4 557.6,142.4 550.6,147.4 569.6,180.4 557.6,186.4 535.6,154.4 531.6,142.4" fill="#cdc8b6"/>
<polygon points="536.4,131.6 550.4,127.6 558.4,141.6 551.4,146.6 570.4,179.6 558.4,185.6 536.4,153.6 532.4,141.6" fill="#cdc8b6"/>
<polygon points="537.2,130.8 551.2,126.8 559.2,140.8 552.2,145.8 571.2,178.8 559.2,184.8 537.2,152.8 533.2,140.8" fill="#cdc8b6"/>
<polygon points="538.0,130.0 552.0,126.0 560.0,140.0 553.0,145.0 572.0,178.0 560.0,184.0 538.0,152.0 534.0,140.0" fill="#e6e1d1"/>
<polygon points="589.6,2.4 638.6,2.4 638.6,27.4 589.6,27.4" fill="#cdc8b6"/>
<polygon points="590.4,1.6 639.4,1.6 639.4,26.6 590.4,26.6" fill="#cdc8b6"/>
<polygon points="591.2,0.8 640.2,0.8 640.2,25.8 591.2,25.8" fill="#cdc8b6"/>
<polygon points="592.0,0.0 641.0,0.0 641.0,25.0 592.0,25.0" fill="#e6e1d1"/>
<polygon points="597.6,45.4 614.6,45.4 614.6,55.4 597.6,55.4" fill="#cdc8b6"/>
<polygon points="598.4,44.6 615.4,44.6 615.4,54.6 598.4,54.6" fill="#cdc8b6"/>
<polygon points="599.2,43.8 616.2,43.8 616.2,53.8 599.2,53.8" fill="#cdc8b6"/>
<polygon points="600.0,43.0 617.0,43.0 617.0,53.0 600.0,53.0" fill="#e6e1d1"/>
<polygon points="619.6,44.4 638.6,44.4 638.6,87.4 619.6,87.4" fill="#cdc8b6"/>
<polygon points="620.4,43.6 639.4,43.6 639.4,86.6 620.4,86.6" fill="#cdc8b6"/>
<polygon points="621.2,42.8 640.2,42.8 640.2,85.8 621.2,85.8" fill="#cdc8b6"/>
<polygon points="622.0,42.0 641.0,42.0 641.0,85.0 622.0,85.0" fill="#e6e1d1"/>
<polygon points="574.6,64.4 586.6,64.4 586.6,91.4 574.6,91.4" fill="#cdc8b6"/>
<polygon points="575.4,63.6 587.4,63.6 587.4,90.6 575.4,90.6" fill="#cdc8b6"/>
<polygon points="576.2,62.8 588.2,62.8 588.2,89.8 576.2,89.8" fill="#cdc8b6"/>
<polygon points="577.0,62.0 589.0,62.0 589.0,89.0 577.0,89.0" fill="#e6e1d1"/>
<polygon points="602.6,61.4 618.6,61.4 618.6,90.4 602.6,90.4" fill="#cdc8b6"/>
<polygon points="603.4,60.6 619.4,60.6 619.4,89.6 603.4,89.6" fill="#cdc8b6"/>
<polygon points="604.2,59.8 620.2,59.8 620.2,88.8 604.2,88.8" fill="#cdc8b6"/>
<polygon points="605.0,59.0 621.0,59.0 621.0,88.0 605.0,88.0" fill="#e6e1d1"/>
<polygon points="643.6,71.4 658.6,71.4 658.6,85.4 643.6,85.4" fill="#cdc8b6"/>
<polygon points="644.4,70.6 659.4,70.6 659.4,84.6 644.4,84.6" fill="#cdc8b6"/>
<polygon points="645.2,69.8 660.2,69.8 660.2,83.8 645.2,83.8" fill="#cdc8b6"/>
<polygon points="646.0,69.0 661.0,69.0 661.0,83.0 646.0,83.0" fill="#e6e1d1"/>
<polygon points="644.6,86.4 657.6,86.4 657.6,105.4 644.6,105.4" fill="#cdc8b6"/>
<polygon points="645.4,85.6 658.4,85.6 658.4,104.6 645.4,104.6" fill="#cdc8b6"/>
<polygon points="646.2,84.8 659.2,84.8 659.2,103.8 646.2,103.8" fill="#cdc8b6"/>
<polygon points="647.0,84.0 660.0,84.0 660.0,103.0 647.0,103.0" fill="#e6e1d1"/>
<polygon points="580.6,105.4 602.6,105.4 602.6,155.4 580.6,155.4" fill="#cdc8b6"/>
<polygon points="581.4,104.6 603.4,104.6 603.4,154.6 581.4,154.6" fill="#cdc8b6"/>
<polygon points="582.2,103.8 604.2,103.8 604.2,153.8 582.2,153.8" fill="#cdc8b6"/>
<polygon points="583.0,103.0 605.0,103.0 605.0,153.0 583.0,153.0" fill="#e6e1d1"/>
<polygon points="606.6,97.4 625.6,97.4 625.6,140.4 606.6,140.4" fill="#cdc8b6"/>
<polygon points="607.4,96.6 626.4,96.6 626.4,139.6 607.4,139.6" fill="#cdc8b6"/>
<polygon points="608.2,95.8 627.2,95.8 627.2,138.8 608.2,138.8" fill="#cdc8b6"/>
<polygon points="609.0,95.0 628.0,95.0 628.0,138.0 609.0,138.0" fill="#e6e1d1"/>
<polygon points="624.6,93.4 640.6,93.4 640.6,133.4 624.6,133.4" fill="#cdc8b6"/>
<polygon points="625.4,92.6 641.4,92.6 641.4,132.6 625.4,132.6" fill="#cdc8b6"/>
<polygon points="626.2,91.8 642.2,91.8 642.2,131.8 626.2,131.8" fill="#cdc8b6"/>
<polygon points="627.0,91.0 643.0,91.0 643.0,131.0 627.0,131.0" fill="#e6e1d1"/>
<polygon points="642.7,116.4 652.1,119.8 644.5,140.4 635.1,137.0" fill="#cdc8b6"/>
<polygon points="643.5,115.6 652.9,119.0 645.3,139.6 635.9,136.2" fill="#cdc8b6"/>
<polygon points="644.3,114.8 653.7,118.2 646.1,138.8 636.7,135.4" fill="#cdc8b6"/>
<polygon points="645.1,114.0 654.5,117.4 646.9,138.0 637.5,134.6" fill="#e6e1d1"/>
<polygon points="616.6,139.4 627.6,139.4 627.6,155.4 616.6,155.4" fill="#cdc8b6"/>
<polygon points="617.4,138.6 628.4,138.6 628.4,154.6 617.4,154.6" fill="#cdc8b6"/>
<polygon points="618.2,137.8 629.2,137.8 629.2,153.8 618.2,153.8" fill="#cdc8b6"/>
<polygon points="619.0,137.0 630.0,137.0 630.0,153.0 619.0,153.0" fill="#e6e1d1"/>
<polygon points="680.6,2.4 695.6,2.4 707.6,72.4 725.6,94.4 752.6,108.4 745.6,115.4 717.6,102.4 697.6,82.4" fill="#cdc8b6"/>
<polygon points="681.4,1.6 696.4,1.6 708.4,71.6 726.4,93.6 753.4,107.6 746.4,114.6 718.4,101.6 698.4,81.6" fill="#cdc8b6"/>
<polygon points="682.2,0.8 697.2,0.8 709.2,70.8 727.2,92.8 754.2,106.8 747.2,113.8 719.2,100.8 699.2,80.8" fill="#cdc8b6"/>
<polygon points="683.0,0.0 698.0,0.0 710.0,70.0 728.0,92.0 755.0,106.0 748.0,113.0 720.0,100.0 700.0,80.0" fill="#e6e1d1"/>
<polygon points="767.6,68.4 803.6,64.4 804.6,92.4 768.6,94.4" fill="#cdc8b6"/>
<polygon points="768.4,67.6 804.4,63.6 805.4,91.6 769.4,93.6" fill="#cdc8b6"/>
<polygon points="769.2,66.8 805.2,62.8 806.2,90.8 770.2,92.8" fill="#cdc8b6"/>
<polygon points="770.0,66.0 806.0,62.0 807.0,90.0 771.0,92.0" fill="#e6e1d1"/>
<polygon points="808.6,78.4 823.6,78.4 823.6,89.4 808.6,89.4" fill="#cdc8b6"/>
<polygon points="809.4,77.6 824.4,77.6 824.4,88.6 809.4,88.6" fill="#cdc8b6"/>
<polygon points="810.2,76.8 825.2,76.8 825.2,87.8 810.2,87.8" fill="#cdc8b6"/>
<polygon points="811.0,76.0 826.0,76.0 826.0,87.0 811.0,87.0" fill="#e6e1d1"/>
<polygon points="826.6,76.4 857.6,68.4 857.6,110.4 830.6,115.4" fill="#cdc8b6"/>
<polygon points="827.4,75.6 858.4,67.6 858.4,109.6 831.4,114.6" fill="#cdc8b6"/>
<polygon points="828.2,74.8 859.2,66.8 859.2,108.8 832.2,113.8" fill="#cdc8b6"/>
<polygon points="829.0,74.0 860.0,66.0 860.0,108.0 833.0,113.0" fill="#e6e1d1"/>
<polygon points="825.6,41.4 836.6,41.4 836.6,64.4 825.6,64.4" fill="#cdc8b6"/>
<polygon points="826.4,40.6 837.4,40.6 837.4,63.6 826.4,63.6" fill="#cdc8b6"/>
<polygon points="827.2,39.8 838.2,39.8 838.2,62.8 827.2,62.8" fill="#cdc8b6"/>
<polygon points="828.0,39.0 839.0,39.0 839.0,62.0 828.0,62.0" fill="#e6e1d1"/>
<polygon points="759.6,104.4 820.6,100.4 821.6,110.4 760.6,120.4" fill="#cdc8b6"/>
<polygon points="760.4,103.6 821.4,99.6 822.4,109.6 761.4,119.6" fill="#cdc8b6"/>
<polygon points="761.2,102.8 822.2,98.8 823.2,108.8 762.2,118.8" fill="#cdc8b6"/>
<polygon points="762.0,102.0 823.0,98.0 824.0,108.0 763.0,118.0" fill="#e6e1d1"/>
<polygon points="805.6,172.4 855.6,154.4 857.6,164.4 809.6,180.4" fill="#cdc8b6"/>
<polygon points="806.4,171.6 856.4,153.6 858.4,163.6 810.4,179.6" fill="#cdc8b6"/>
<polygon points="807.2,170.8 857.2,152.8 859.2,162.8 811.2,178.8" fill="#cdc8b6"/>
<polygon points="808.0,170.0 858.0,152.0 860.0,162.0 812.0,178.0" fill="#e6e1d1"/>
<polygon points="847.6,72.4 874.6,72.4 874.6,107.4 847.6,107.4" fill="#cdc8b6"/>
<polygon points="848.4,71.6 875.4,71.6 875.4,106.6 848.4,106.6" fill="#cdc8b6"/>
<polygon points="849.2,70.8 876.2,70.8 876.2,105.8 849.2,105.8" fill="#cdc8b6"/>
<polygon points="850.0,70.0 877.0,70.0 877.0,105.0 850.0,105.0" fill="#e6e1d1"/>
<polygon points="873.6,74.4 885.6,74.4 885.6,94.4 873.6,94.4" fill="#cdc8b6"/>
<polygon points="874.4,73.6 886.4,73.6 886.4,93.6 874.4,93.6" fill="#cdc8b6"/>
<polygon points="875.2,72.8 887.2,72.8 887.2,92.8 875.2,92.8" fill="#cdc8b6"/>
<polygon points="876.0,72.0 888.0,72.0 888.0,92.0 876.0,92.0" fill="#e6e1d1"/>
<polygon points="883.6,72.4 903.6,72.4 903.6,90.4 883.6,90.4" fill="#cdc8b6"/>
<polygon points="884.4,71.6 904.4,71.6 904.4,89.6 884.4,89.6" fill="#cdc8b6"/>
<polygon points="885.2,70.8 905.2,70.8 905.2,88.8 885.2,88.8" fill="#cdc8b6"/>
<polygon points="886.0,70.0 906.0,70.0 906.0,88.0 886.0,88.0" fill="#e6e1d1"/>
<polygon points="904.6,64.4 921.6,64.4 921.6,84.4 904.6,84.4" fill="#cdc8b6"/>
<polygon points="905.4,63.6 922.4,63.6 922.4,83.6 905.4,83.6" fill="#cdc8b6"/>
<polygon points="906.2,62.8 923.2,62.8 923.2,82.8 906.2,82.8" fill="#cdc8b6"/>
<polygon points="907.0,62.0 924.0,62.0 924.0,82.0 907.0,82.0" fill="#e6e1d1"/>
<polygon points="920.6,60.4 941.6,60.4 941.6,78.4 920.6,78.4" fill="#cdc8b6"/>
<polygon points="921.4,59.6 942.4,59.6 942.4,77.6 921.4,77.6" fill="#cdc8b6"/>
<polygon points="922.2,58.8 943.2,58.8 943.2,76.8 922.2,76.8" fill="#cdc8b6"/>
<polygon points="923.0,58.0 944.0,58.0 944.0,76.0 923.0,76.0" fill="#e6e1d1"/>
<polygon points="924.6,2.4 1007.6,2.4 1008.6,47.4 950.6,67.4 943.6,54.4 929.6,54.4" fill="#cdc8b6"/>
<polygon points="925.4,1.6 1008.4,1.6 1009.4,46.6 951.4,66.6 944.4,53.6 930.4,53.6" fill="#cdc8b6"/>
<polygon points="926.2,0.8 1009.2,0.8 1010.2,45.8 952.2,65.8 945.2,52.8 931.2,52.8" fill="#cdc8b6"/>
<polygon points="927.0,0.0 1010.0,0.0 1011.0,45.0 953.0,65.0 946.0,52.0 932.0,52.0" fill="#e6e1d1"/>
<polygon points="945.6,110.4 974.6,98.4 1005.6,96.4 1037.6,80.4 1059.6,77.4 1085.6,110.4 1087.6,122.4 1080.6,127.4 1092.6,167.4 1044.6,184.4 1035.6,152.4 1027.6,154.4 1037.6,192.4 987.6,192.4 967.6,152.4" fill="#cdc8b6"/>
<polygon points="946.4,109.6 975.4,97.6 1006.4,95.6 1038.4,79.6 1060.4,76.6 1086.4,109.6 1088.4,121.6 1081.4,126.6 1093.4,166.6 1045.4,183.6 1036.4,151.6 1028.4,153.6 1038.4,191.6 988.4,191.6 968.4,151.6" fill="#cdc8b6"/>
<polygon points="947.2,108.8 976.2,96.8 1007.2,94.8 1039.2,78.8 1061.2,75.8 1087.2,108.8 1089.2,120.8 1082.2,125.8 1094.2,165.8 1046.2,182.8 1037.2,150.8 1029.2,152.8 1039.2,190.8 989.2,190.8 969.2,150.8" fill="#cdc8b6"/>
<polygon points="948.0,108.0 977.0,96.0 1008.0,94.0 1040.0,78.0 1062.0,75.0 1088.0,108.0 1090.0,120.0 1083.0,125.0 1095.0,165.0 1047.0,182.0 1038.0,150.0 1030.0,152.0 1040.0,190.0 990.0,190.0 970.0,150.0" fill="#e6e1d1"/>
<polygon points="897.6,145.4 932.6,132.4 949.6,192.4 915.6,192.4" fill="#cdc8b6"/>
<polygon points="898.4,144.6 933.4,131.6 950.4,191.6 916.4,191.6" fill="#cdc8b6"/>
<polygon points="899.2,143.8 934.2,130.8 951.2,190.8 917.2,190.8" fill="#cdc8b6"/>
<polygon points="900.0,143.0 935.0,130.0 952.0,190.0 918.0,190.0" fill="#e6e1d1"/>
<polygon points="847.6,140.4 893.6,136.4 895.6,144.4 849.6,158.4" fill="#cdc8b6"/>
<polygon points="848.4,139.6 894.4,135.6 896.4,143.6 850.4,157.6" fill="#cdc8b6"/>
<polygon points="849.2,138.8 895.2,134.8 897.2,142.8 851.2,156.8" fill="#cdc8b6"/>
<polygon points="850.0,138.0 896.0,134.0 898.0,142.0 852.0,156.0" fill="#e6e1d1"/>
<polygon points="1109.6,30.4 1137.6,10.4 1137.6,62.4 1117.6,82.4 1108.6,80.4" fill="#cdc8b6"/>
<polygon points="1110.4,29.6 1138.4,9.6 1138.4,61.6 1118.4,81.6 1109.4,79.6" fill="#cdc8b6"/>
<polygon points="1111.2,28.8 1139.2,8.8 1139.2,60.8 1119.2,80.8 1110.2,78.8" fill="#cdc8b6"/>
<polygon points="1112.0,28.0 1140.0,8.0 1140.0,60.0 1120.0,80.0 1111.0,78.0" fill="#e6e1d1"/>
<polygon points="1118.6,82.4 1137.6,82.4 1137.6,128.4 1118.6,128.4" fill="#cdc8b6"/>
<polygon points="1119.4,81.6 1138.4,81.6 1138.4,127.6 1119.4,127.6" fill="#cdc8b6"/>
<polygon points="1120.2,80.8 1139.2,80.8 1139.2,126.8 1120.2,126.8" fill="#cdc8b6"/>
<polygon points="1121.0,80.0 1140.0,80.0 1140.0,126.0 1121.0,126.0" fill="#e6e1d1"/>
<polygon points="587.6,222.4 606.6,222.4 606.6,236.4 587.6,236.4" fill="#cdc8b6"/>
<polygon points="588.4,221.6 607.4,221.6 607.4,235.6 588.4,235.6" fill="#cdc8b6"/>
<polygon points="589.2,220.8 608.2,220.8 608.2,234.8 589.2,234.8" fill="#cdc8b6"/>
<polygon points="590.0,220.0 609.0,220.0 609.0,234.0 590.0,234.0" fill="#e6e1d1"/>
<polygon points="625.6,232.4 655.6,232.4 655.6,272.4 625.6,272.4" fill="#cdc8b6"/>
<polygon points="626.4,231.6 656.4,231.6 656.4,271.6 626.4,271.6" fill="#cdc8b6"/>
<polygon points="627.2,230.8 657.2,230.8 657.2,270.8 627.2,270.8" fill="#cdc8b6"/>
<polygon points="628.0,230.0 658.0,230.0 658.0,270.0 628.0,270.0" fill="#e6e1d1"/>
<polygon points="605.9,290.0 621.8,284.2 629.3,304.8 613.4,310.6" fill="#cdc8b6"/>
<polygon points="606.7,289.2 622.6,283.4 630.1,304.0 614.2,309.8" fill="#cdc8b6"/>
<polygon points="607.5,288.4 623.4,282.6 630.9,303.2 615.0,309.0" fill="#cdc8b6"/>
<polygon points="608.3,287.6 624.2,281.8 631.7,302.4 615.8,308.2" fill="#e6e1d1"/>
<polygon points="629.6,278.4 669.6,278.4 669.6,338.4 629.6,338.4" fill="#cdc8b6"/>
<polygon points="630.4,277.6 670.4,277.6 670.4,337.6 630.4,337.6" fill="#cdc8b6"/>
<polygon points="631.2,276.8 671.2,276.8 671.2,336.8 631.2,336.8" fill="#cdc8b6"/>
<polygon points="632.0,276.0 672.0,276.0 672.0,336.0 632.0,336.0" fill="#e6e1d1"/>
<polygon points="576.6,296.4 587.6,296.4 587.6,306.4 576.6,306.4" fill="#cdc8b6"/>
<polygon points="577.4,295.6 588.4,295.6 588.4,305.6 577.4,305.6" fill="#cdc8b6"/>
<polygon points="578.2,294.8 589.2,294.8 589.2,304.8 578.2,304.8" fill="#cdc8b6"/>
<polygon points="579.0,294.0 590.0,294.0 590.0,304.0 579.0,304.0" fill="#e6e1d1"/>
<polygon points="565.7,331.0 585.7,321.7 589.5,329.8 569.5,339.1" fill="#cdc8b6"/>
<polygon points="566.5,330.2 586.5,320.9 590.3,329.0 570.3,338.3" fill="#cdc8b6"/>
<polygon points="567.3,329.4 587.3,320.1 591.1,328.2 571.1,337.5" fill="#cdc8b6"/>
<polygon points="568.1,328.6 588.1,319.3 591.9,327.4 571.9,336.7" fill="#e6e1d1"/>
<polygon points="599.8,342.8 620.5,335.2 627.4,354.0 606.7,361.6" fill="#cdc8b6"/>
<polygon points="600.6,342.0 621.3,334.4 628.2,353.2 607.5,360.8" fill="#cdc8b6"/>
<polygon points="601.4,341.2 622.1,333.6 629.0,352.4 608.3,360.0" fill="#cdc8b6"/>
<polygon points="602.2,340.4 622.9,332.8 629.8,351.6 609.1,359.2" fill="#e6e1d1"/>
<polygon points="623.1,357.4 641.0,350.9 644.1,359.4 626.2,365.9" fill="#cdc8b6"/>
<polygon points="623.9,356.6 641.8,350.1 644.9,358.6 627.0,365.1" fill="#cdc8b6"/>
<polygon points="624.7,355.8 642.6,349.3 645.7,357.8 627.8,364.3" fill="#cdc8b6"/>
<polygon points="625.5,355.0 643.4,348.5 646.5,357.0 628.6,363.5" fill="#e6e1d1"/>
<polygon points="654.6,354.4 671.6,354.4 671.6,378.4 654.6,378.4" fill="#cdc8b6"/>
<polygon points="655.4,353.6 672.4,353.6 672.4,377.6 655.4,377.6" fill="#cdc8b6"/>
<polygon points="656.2,352.8 673.2,352.8 673.2,376.8 656.2,376.8" fill="#cdc8b6"/>
<polygon points="657.0,352.0 674.0,352.0 674.0,376.0 657.0,376.0" fill="#e6e1d1"/>
<polygon points="567.6,240.4 597.6,234.4 609.6,258.4 615.6,264.4 592.6,280.4 567.6,278.4" fill="#cdc8b6"/>
<polygon points="568.4,239.6 598.4,233.6 610.4,257.6 616.4,263.6 593.4,279.6 568.4,277.6" fill="#cdc8b6"/>
<polygon points="569.2,238.8 599.2,232.8 611.2,256.8 617.2,262.8 594.2,278.8 569.2,276.8" fill="#cdc8b6"/>
<polygon points="570.0,238.0 600.0,232.0 612.0,256.0 618.0,262.0 595.0,278.0 570.0,276.0" fill="#e6e1d1"/>
<polygon points="754.6,207.4 764.6,212.4 730.6,293.4 719.6,291.4" fill="#cdc8b6"/>
<polygon points="755.4,206.6 765.4,211.6 731.4,292.6 720.4,290.6" fill="#cdc8b6"/>
<polygon points="756.2,205.8 766.2,210.8 732.2,291.8 721.2,289.8" fill="#cdc8b6"/>
<polygon points="757.0,205.0 767.0,210.0 733.0,291.0 722.0,289.0" fill="#e6e1d1"/>
<polygon points="720.6,294.4 767.6,294.4 767.6,334.4 720.6,334.4" fill="#cdc8b6"/>
<polygon points="721.4,293.6 768.4,293.6 768.4,333.6 721.4,333.6" fill="#cdc8b6"/>
<polygon points="722.2,292.8 769.2,292.8 769.2,332.8 722.2,332.8" fill="#cdc8b6"/>
<polygon points="723.0,292.0 770.0,292.0 770.0,332.0 723.0,332.0" fill="#e6e1d1"/>
<polygon points="771.6,238.4 802.6,231.4 809.6,252.4 840.6,232.4 855.6,228.4 857.6,353.4 817.6,352.4 797.6,322.4" fill="#cdc8b6"/>
<polygon points="772.4,237.6 803.4,230.6 810.4,251.6 841.4,231.6 856.4,227.6 858.4,352.6 818.4,351.6 798.4,321.6" fill="#cdc8b6"/>
<polygon points="773.2,236.8 804.2,229.8 811.2,250.8 842.2,230.8 857.2,226.8 859.2,351.8 819.2,350.8 799.2,320.8" fill="#cdc8b6"/>
<polygon points="774.0,236.0 805.0,229.0 812.0,250.0 843.0,230.0 858.0,226.0 860.0,351.0 820.0,350.0 800.0,320.0" fill="#e6e1d1"/>
<polygon points="847.6,243.4 877.6,252.4 879.6,274.4 875.6,282.4 880.6,338.4 849.6,342.4" fill="#cdc8b6"/>
<polygon points="848.4,242.6 878.4,251.6 880.4,273.6 876.4,281.6 881.4,337.6 850.4,341.6" fill="#cdc8b6"/>
<polygon points="849.2,241.8 879.2,250.8 881.2,272.8 877.2,280.8 882.2,336.8 851.2,340.8" fill="#cdc8b6"/>
<polygon points="850.0,241.0 880.0,250.0 882.0,272.0 878.0,280.0 883.0,336.0 852.0,340.0" fill="#e6e1d1"/>
<polygon points="873.6,242.4 895.6,242.4 895.6,259.4 873.6,259.4" fill="#cdc8b6"/>
<polygon points="874.4,241.6 896.4,241.6 896.4,258.6 874.4,258.6" fill="#cdc8b6"/>
<polygon points="875.2,240.8 897.2,240.8 897.2,257.8 875.2,257.8" fill="#cdc8b6"/>
<polygon points="876.0,240.0 898.0,240.0 898.0,257.0 876.0,257.0" fill="#e6e1d1"/>
<polygon points="863.6,278.4 919.6,264.4 921.6,274.4 868.6,298.4" fill="#cdc8b6"/>
<polygon points="864.4,277.6 920.4,263.6 922.4,273.6 869.4,297.6" fill="#cdc8b6"/>
<polygon points="865.2,276.8 921.2,262.8 923.2,272.8 870.2,296.8" fill="#cdc8b6"/>
<polygon points="866.0,276.0 922.0,262.0 924.0,272.0 871.0,296.0" fill="#e6e1d1"/>
<polygon points="901.6,233.4 937.3,220.4 959.6,281.4 923.9,294.4" fill="#cdc8b6"/>
<polygon points="902.4,232.6 938.1,219.6 960.4,280.6 924.7,293.6" fill="#cdc8b6"/>
<polygon points="903.2,231.8 938.9,218.8 961.2,279.8 925.5,292.8" fill="#cdc8b6"/>
<polygon points="904.0,231.0 939.7,218.0 962.0,279.0 926.3,292.0" fill="#e6e1d1"/>
<polygon points="920.3,343.3 938.1,336.8 944.9,355.5 927.1,362.0" fill="#cdc8b6"/>
<polygon points="921.1,342.5 938.9,336.0 945.7,354.7 927.9,361.2" fill="#cdc8b6"/>
<polygon points="921.9,341.7 939.7,335.2 946.5,353.9 928.7,360.4" fill="#cdc8b6"/>
<polygon points="922.7,340.9 940.5,334.4 947.3,353.1 929.5,359.6" fill="#e6e1d1"/>
<polygon points="963.4,338.4 974.7,334.3 979.8,348.4 968.5,352.5" fill="#cdc8b6"/>
<polygon points="964.2,337.6 975.5,333.5 980.6,347.6 969.3,351.7" fill="#cdc8b6"/>
<polygon points="965.0,336.8 976.3,332.7 981.4,346.8 970.1,350.9" fill="#cdc8b6"/>
<polygon points="965.8,336.0 977.1,331.9 982.2,346.0 970.9,350.1" fill="#e6e1d1"/>
<polygon points="975.6,188.4 1039.6,188.4 1039.6,207.4 987.6,218.4" fill="#cdc8b6"/>
<polygon points="976.4,187.6 1040.4,187.6 1040.4,206.6 988.4,217.6" fill="#cdc8b6"/>
<polygon points="977.2,186.8 1041.2,186.8 1041.2,205.8 989.2,216.8" fill="#cdc8b6"/>
<polygon points="978.0,186.0 1042.0,186.0 1042.0,205.0 990.0,216.0" fill="#e6e1d1"/>
<polygon points="1003.6,234.4 1095.6,205.4 1119.6,288.4 1057.6,302.4 1032.6,305.4 1020.6,308.4 1012.6,292.4" fill="#cdc8b6"/>
<polygon points="1004.4,233.6 1096.4,204.6 1120.4,287.6 1058.4,301.6 1033.4,304.6 1021.4,307.6 1013.4,291.6" fill="#cdc8b6"/>
<polygon points="1005.2,232.8 1097.2,203.8 1121.2,286.8 1059.2,300.8 1034.2,303.8 1022.2,306.8 1014.2,290.8" fill="#cdc8b6"/>
<polygon points="1006.0,232.0 1098.0,203.0 1122.0,286.0 1060.0,300.0 1035.0,303.0 1023.0,306.0 1015.0,290.0" fill="#e6e1d1"/>
<polygon points="992.6,277.8 1004.8,273.4 1012.6,295.0 1000.4,299.4" fill="#cdc8b6"/>
<polygon points="993.4,277.0 1005.6,272.6 1013.4,294.2 1001.2,298.6" fill="#cdc8b6"/>
<polygon points="994.2,276.2 1006.4,271.8 1014.2,293.4 1002.0,297.8" fill="#cdc8b6"/>
<polygon points="995.0,275.4 1007.2,271.0 1015.0,292.6 1002.8,297.0" fill="#e6e1d1"/>
<polygon points="990.6,255.4 995.6,255.4 995.6,264.4 990.6,264.4" fill="#cdc8b6"/>
<polygon points="991.4,254.6 996.4,254.6 996.4,263.6 991.4,263.6" fill="#cdc8b6"/>
<polygon points="992.2,253.8 997.2,253.8 997.2,262.8 992.2,262.8" fill="#cdc8b6"/>
<polygon points="993.0,253.0 998.0,253.0 998.0,262.0 993.0,262.0" fill="#e6e1d1"/>
<polygon points="1002.6,315.4 1016.6,315.4 1016.6,327.4 1002.6,327.4" fill="#cdc8b6"/>
<polygon points="1003.4,314.6 1017.4,314.6 1017.4,326.6 1003.4,326.6" fill="#cdc8b6"/>
<polygon points="1004.2,313.8 1018.2,313.8 1018.2,325.8 1004.2,325.8" fill="#cdc8b6"/>
<polygon points="1005.0,313.0 1019.0,313.0 1019.0,325.0 1005.0,325.0" fill="#e6e1d1"/>
<polygon points="1023.5,326.3 1036.1,323.0 1047.7,366.5 1035.1,369.8" fill="#cdc8b6"/>
<polygon points="1024.3,325.5 1036.9,322.2 1048.5,365.7 1035.9,369.0" fill="#cdc8b6"/>
<polygon points="1025.1,324.7 1037.7,321.4 1049.3,364.9 1036.7,368.2" fill="#cdc8b6"/>
<polygon points="1025.9,323.9 1038.5,320.6 1050.1,364.1 1037.5,367.4" fill="#e6e1d1"/>
<polygon points="1007.9,350.4 1028.6,342.9 1031.3,350.4 1010.6,357.9" fill="#cdc8b6"/>
<polygon points="1008.7,349.6 1029.4,342.1 1032.1,349.6 1011.4,357.1" fill="#cdc8b6"/>
<polygon points="1009.5,348.8 1030.2,341.3 1032.9,348.8 1012.2,356.3" fill="#cdc8b6"/>
<polygon points="1010.3,348.0 1031.0,340.5 1033.7,348.0 1013.0,355.5" fill="#e6e1d1"/>
<polygon points="1030.6,357.4 1045.6,357.4 1045.6,371.4 1030.6,371.4" fill="#cdc8b6"/>
<polygon points="1031.4,356.6 1046.4,356.6 1046.4,370.6 1031.4,370.6" fill="#cdc8b6"/>
<polygon points="1032.2,355.8 1047.2,355.8 1047.2,369.8 1032.2,369.8" fill="#cdc8b6"/>
<polygon points="1033.0,355.0 1048.0,355.0 1048.0,369.0 1033.0,369.0" fill="#e6e1d1"/>
<polygon points="1124.6,267.4 1137.6,267.4 1137.6,284.4 1124.6,284.4" fill="#cdc8b6"/>
<polygon points="1125.4,266.6 1138.4,266.6 1138.4,283.6 1125.4,283.6" fill="#cdc8b6"/>
<polygon points="1126.2,265.8 1139.2,265.8 1139.2,282.8 1126.2,282.8" fill="#cdc8b6"/>
<polygon points="1127.0,265.0 1140.0,265.0 1140.0,282.0 1127.0,282.0" fill="#e6e1d1"/>
<polygon points="427.2,311.4 468.5,295.6 476.4,291.7 481.3,306.4 494.1,314.3 495.1,326.1 487.2,330.0 479.3,324.1 471.5,330.0 465.6,322.2 445.9,334.0 438.0,332.0" fill="#cdc8b6"/>
<polygon points="428.0,310.6 469.3,294.8 477.2,290.9 482.1,305.6 494.9,313.5 495.9,325.3 488.0,329.2 480.1,323.3 472.3,329.2 466.4,321.4 446.7,333.2 438.8,331.2" fill="#cdc8b6"/>
<polygon points="428.8,309.8 470.1,294.0 478.0,290.1 482.9,304.8 495.7,312.7 496.7,324.5 488.8,328.4 480.9,322.5 473.1,328.4 467.2,320.6 447.5,332.4 439.6,330.4" fill="#cdc8b6"/>
<polygon points="429.6,309.0 470.9,293.2 478.8,289.3 483.7,304.0 496.5,311.9 497.5,323.7 489.6,327.6 481.7,321.7 473.9,327.6 468.0,319.8 448.3,331.6 440.4,329.6" fill="#e6e1d1"/>
<polygon points="499.0,279.9 510.8,295.6 504.9,301.5 494.1,288.7" fill="#cdc8b6"/>
<polygon points="499.8,279.1 511.6,294.8 505.7,300.7 494.9,287.9" fill="#cdc8b6"/>
<polygon points="500.6,278.3 512.4,294.0 506.5,299.9 495.7,287.1" fill="#cdc8b6"/>
<polygon points="501.4,277.5 513.2,293.2 507.3,299.1 496.5,286.3" fill="#e6e1d1"/>
<polygon points="524.6,276.9 536.4,271.0 538.4,276.9 526.6,281.8" fill="#cdc8b6"/>
<polygon points="525.4,276.1 537.2,270.2 539.2,276.1 527.4,281.0" fill="#cdc8b6"/>
<polygon points="526.2,275.3 538.0,269.4 540.0,275.3 528.2,280.2" fill="#cdc8b6"/>
<polygon points="527.0,274.5 538.8,268.6 540.8,274.5 529.0,279.4" fill="#e6e1d1"/>
<polygon points="538.4,280.9 546.2,278.9 548.2,290.7 542.3,295.6 536.4,284.8" fill="#cdc8b6"/>
<polygon points="539.2,280.1 547.0,278.1 549.0,289.9 543.1,294.8 537.2,284.0" fill="#cdc8b6"/>
<polygon points="540.0,279.3 547.8,277.3 549.8,289.1 543.9,294.0 538.0,283.2" fill="#cdc8b6"/>
<polygon points="540.8,278.5 548.6,276.5 550.6,288.3 544.7,293.2 538.8,282.4" fill="#e6e1d1"/>
<polygon points="538.4,263.2 550.2,255.3 558.0,267.1 546.2,273.0" fill="#cdc8b6"/>
<polygon points="539.2,262.4 551.0,254.5 558.8,266.3 547.0,272.2" fill="#cdc8b6"/>
<polygon points="540.0,261.6 551.8,253.7 559.6,265.5 547.8,271.4" fill="#cdc8b6"/>
<polygon points="540.8,260.8 552.6,252.9 560.4,264.7 548.6,270.6" fill="#e6e1d1"/>
<polygon points="525.6,306.4 533.4,298.6 550.2,318.2 544.3,328.1" fill="#cdc8b6"/>
<polygon points="526.4,305.6 534.2,297.8 551.0,317.4 545.1,327.3" fill="#cdc8b6"/>
<polygon points="527.2,304.8 535.0,297.0 551.8,316.6 545.9,326.5" fill="#cdc8b6"/>
<polygon points="528.0,304.0 535.8,296.2 552.6,315.8 546.7,325.7" fill="#e6e1d1"/>
<polygon points="554.1,212.0 569.8,204.1 572.6,217.9 558.0,223.8" fill="#cdc8b6"/>
<polygon points="554.9,211.2 570.6,203.3 573.4,217.1 558.8,223.0" fill="#cdc8b6"/>
<polygon points="555.7,210.4 571.4,202.5 574.2,216.3 559.6,222.2" fill="#cdc8b6"/>
<polygon points="556.5,209.6 572.2,201.7 575.0,215.5 560.4,221.4" fill="#e6e1d1"/>
<polygon points="556.1,249.4 572.6,238.6 572.6,276.9" fill="#cdc8b6"/>
<polygon points="556.9,248.6 573.4,237.8 573.4,276.1" fill="#cdc8b6"/>
<polygon points="557.7,247.8 574.2,237.0 574.2,275.3" fill="#cdc8b6"/>
<polygon points="558.5,247.0 575.0,236.2 575.0,274.5" fill="#e6e1d1"/>
<polygon points="418.3,336.0 429.2,328.1 438.0,339.9 427.2,345.8" fill="#cdc8b6"/>
<polygon points="419.1,335.2 430.0,327.3 438.8,339.1 428.0,345.0" fill="#cdc8b6"/>
<polygon points="419.9,334.4 430.8,326.5 439.6,338.3 428.8,344.2" fill="#cdc8b6"/>
<polygon points="420.7,333.6 431.6,325.7 440.4,337.5 429.6,343.4" fill="#e6e1d1"/>
<polygon points="361.3,349.7 373.1,343.8 377.0,357.6 365.2,359.6" fill="#cdc8b6"/>
<polygon points="362.1,348.9 373.9,343.0 377.8,356.8 366.0,358.8" fill="#cdc8b6"/>
<polygon points="362.9,348.1 374.7,342.2 378.6,356.0 366.8,358.0" fill="#cdc8b6"/>
<polygon points="363.7,347.3 375.5,341.4 379.4,355.2 367.6,357.2" fill="#e6e1d1"/>
<polygon points="341.6,357.6 351.5,354.6 355.4,365.5 343.6,366.4" fill="#cdc8b6"/>
<polygon points="342.4,356.8 352.3,353.8 356.2,364.7 344.4,365.6" fill="#cdc8b6"/>
<polygon points="343.2,356.0 353.1,353.0 357.0,363.9 345.2,364.8" fill="#cdc8b6"/>
<polygon points="344.0,355.2 353.9,352.2 357.8,363.1 346.0,364.0" fill="#e6e1d1"/>
<polygon points="424.2,349.7 434.1,343.8 440.0,353.7 430.2,357.6" fill="#cdc8b6"/>
<polygon points="425.0,348.9 434.9,343.0 440.8,352.9 431.0,356.8" fill="#cdc8b6"/>
<polygon points="425.8,348.1 435.7,342.2 441.6,352.1 431.8,356.0" fill="#cdc8b6"/>
<polygon points="426.6,347.3 436.5,341.4 442.4,351.3 432.6,355.2" fill="#e6e1d1"/>
<polygon points="428.2,365.5 438.0,357.6 447.9,371.4 438.0,378.4" fill="#cdc8b6"/>
<polygon points="429.0,364.7 438.8,356.8 448.7,370.6 438.8,377.6" fill="#cdc8b6"/>
<polygon points="429.8,363.9 439.6,356.0 449.5,369.8 439.6,376.8" fill="#cdc8b6"/>
<polygon points="430.6,363.1 440.4,355.2 450.3,369.0 440.4,376.0" fill="#e6e1d1"/>
<polygon points="563.9,334.0 572.6,326.1 572.6,339.9" fill="#cdc8b6"/>
<polygon points="564.7,333.2 573.4,325.3 573.4,339.1" fill="#cdc8b6"/>
<polygon points="565.5,332.4 574.2,324.5 574.2,338.3" fill="#cdc8b6"/>
<polygon points="566.3,331.6 575.0,323.7 575.0,337.5" fill="#e6e1d1"/>
<polygon points="542.3,378.4 548.2,369.4 558.0,378.4" fill="#cdc8b6"/>
<polygon points="543.1,377.6 549.0,368.6 558.8,377.6" fill="#cdc8b6"/>
<polygon points="543.9,376.8 549.8,367.8 559.6,376.8" fill="#cdc8b6"/>
<polygon points="544.7,376.0 550.6,367.0 560.4,376.0" fill="#e6e1d1"/>
<g transform="translate(670,65) rotate(90)"><path d="M-5.0,0 H5.0 M2.0,-2 L5.0,0 L2.0,2" stroke="#555a7a" stroke-width="1" fill="none"/></g>
<g transform="translate(682,73) rotate(-90)"><path d="M-5.0,0 H5.0 M2.0,-2 L5.0,0 L2.0,2" stroke="#555a7a" stroke-width="1" fill="none"/></g>
<g transform="translate(851,120) rotate(160)"><path d="M-5.0,0 H5.0 M2.0,-2 L5.0,0 L2.0,2" stroke="#555a7a" stroke-width="1" fill="none"/></g>
<g transform="translate(743,178) rotate(-90)"><path d="M-5.0,0 H5.0 M2.0,-2 L5.0,0 L2.0,2" stroke="#555a7a" stroke-width="1" fill="none"/></g>
<g transform="translate(763,173) rotate(-40)"><path d="M-5.0,0 H5.0 M2.0,-2 L5.0,0 L2.0,2" stroke="#555a7a" stroke-width="1" fill="none"/></g>
<g transform="translate(877,118) rotate(-20)"><path d="M-5.0,0 H5.0 M2.0,-2 L5.0,0 L2.0,2" stroke="#555a7a" stroke-width="1" fill="none"/></g>
<g transform="translate(997,72) rotate(-20)"><path d="M-5.0,0 H5.0 M2.0,-2 L5.0,0 L2.0,2" stroke="#555a7a" stroke-width="1" fill="none"/></g>
<g transform="translate(1075,9) rotate(160)"><path d="M-5.0,0 H5.0 M2.0,-2 L5.0,0 L2.0,2" stroke="#555a7a" stroke-width="1" fill="none"/></g>
<g transform="translate(1114,51) rotate(-50)"><path d="M-5.0,0 H5.0 M2.0,-2 L5.0,0 L2.0,2" stroke="#555a7a" stroke-width="1" fill="none"/></g>
<g transform="translate(652,190) rotate(90)"><path d="M-5.0,0 H5.0 M2.0,-2 L5.0,0 L2.0,2" stroke="#555a7a" stroke-width="1" fill="none"/></g>
<g transform="translate(701,297) rotate(-75)"><path d="M-5.0,0 H5.0 M2.0,-2 L5.0,0 L2.0,2" stroke="#555a7a" stroke-width="1" fill="none"/></g>
<text x="107.0" y="90.0" transform="rotate(37 107.0 90.0)" text-anchor="middle" dominant-baseline="central" style="font-size:9px;fill:#222;stroke:#fff;stroke-width:2.2px;paint-order:stroke">Ереванская улица</text>
<text x="278.0" y="236.0" transform="rotate(41 278.0 236.0)" text-anchor="middle" dominant-baseline="central" style="font-size:9px;fill:#222;stroke:#fff;stroke-width:2.2px;paint-order:stroke">Ереванская улица</text>
<text x="44.0" y="291.0" transform="rotate(47 44.0 291.0)" text-anchor="middle" dominant-baseline="central" style="font-size:9px;fill:#222;stroke:#fff;stroke-width:2.2px;paint-order:stroke">Степной переулок</text>
<text x="457.0" y="87.0" transform="rotate(53 457.0 87.0)" text-anchor="middle" dominant-baseline="central" style="font-size:9px;fill:#222;stroke:#fff;stroke-width:2.2px;paint-order:stroke">Лысогорский переулок</text>
<text x="426.0" y="160.0" transform="rotate(-37 426.0 160.0)" text-anchor="middle" dominant-baseline="central" style="font-size:9px;fill:#222;stroke:#fff;stroke-width:2.2px;paint-order:stroke">Лысогорский переулок</text>
<text x="447.0" y="289.0" transform="rotate(-24 447.0 289.0)" text-anchor="middle" dominant-baseline="central" style="font-size:10px;fill:#222;stroke:#fff;stroke-width:2.2px;paint-order:stroke">Георгиевская улица</text>
<text x="948.0" y="81.0" transform="rotate(-20 948.0 81.0)" text-anchor="middle" dominant-baseline="central" style="font-size:11px;fill:#222;stroke:#fff;stroke-width:2.2px;paint-order:stroke">07K-027</text>
<text x="948.0" y="92.0" transform="rotate(-20 948.0 92.0)" text-anchor="middle" dominant-baseline="central" style="font-size:11px;fill:#222;stroke:#fff;stroke-width:2.2px;paint-order:stroke">07K-027</text>
<text x="1048.0" y="136.0" transform="rotate(0 1048.0 136.0)" text-anchor="middle" dominant-baseline="central" style="font-size:10px;fill:#222;stroke:#fff;stroke-width:2.2px;paint-order:stroke">6</text>
<text x="549.0" y="268.0" transform="rotate(0 549.0 268.0)" text-anchor="middle" dominant-baseline="central" style="font-size:9.5px;fill:#222;stroke:#fff;stroke-width:2.2px;paint-order:stroke">288</text>
<text x="531.0" y="282.0" transform="rotate(0 531.0 282.0)" text-anchor="middle" dominant-baseline="central" style="font-size:9.5px;fill:#222;stroke:#fff;stroke-width:2.2px;paint-order:stroke">286</text>
<text x="502.0" y="294.0" transform="rotate(0 502.0 294.0)" text-anchor="middle" dominant-baseline="central" style="font-size:9.5px;fill:#222;stroke:#fff;stroke-width:2.2px;paint-order:stroke">284</text>
<text x="475.0" y="306.0" transform="rotate(0 475.0 306.0)" text-anchor="middle" dominant-baseline="central" style="font-size:9.5px;fill:#222;stroke:#fff;stroke-width:2.2px;paint-order:stroke">282</text>
<text x="455.0" y="319.0" transform="rotate(0 455.0 319.0)" text-anchor="middle" dominant-baseline="central" style="font-size:9.5px;fill:#222;stroke:#fff;stroke-width:2.2px;paint-order:stroke">280</text>
<text x="370.0" y="357.0" transform="rotate(0 370.0 357.0)" text-anchor="middle" dominant-baseline="central" style="font-size:9.5px;fill:#222;stroke:#fff;stroke-width:2.2px;paint-order:stroke">276</text>
<text x="394.0" y="372.0" transform="rotate(0 394.0 372.0)" text-anchor="middle" dominant-baseline="central" style="font-size:9.5px;fill:#222;stroke:#fff;stroke-width:2.2px;paint-order:stroke">40</text>
<text x="597.0" y="237.0" transform="rotate(0 597.0 237.0)" text-anchor="middle" dominant-baseline="central" style="font-size:9.5px;fill:#222;stroke:#fff;stroke-width:2.2px;paint-order:stroke">290А</text>
<text x="578.0" y="257.0" transform="rotate(0 578.0 257.0)" text-anchor="middle" dominant-baseline="central" style="font-size:9.5px;fill:#222;stroke:#fff;stroke-width:2.2px;paint-order:stroke">290</text>
<text x="641.0" y="255.0" transform="rotate(0 641.0 255.0)" text-anchor="middle" dominant-baseline="central" style="font-size:9.5px;fill:#222;stroke:#fff;stroke-width:2.2px;paint-order:stroke">292</text>
<text x="641.0" y="293.0" transform="rotate(0 641.0 293.0)" text-anchor="middle" dominant-baseline="central" style="font-size:9.5px;fill:#222;stroke:#fff;stroke-width:2.2px;paint-order:stroke">294</text>
<text x="647.0" y="313.0" transform="rotate(0 647.0 313.0)" text-anchor="middle" dominant-baseline="central" style="font-size:9.5px;fill:#222;stroke:#fff;stroke-width:2.2px;paint-order:stroke">296</text>
<text x="663.0" y="368.0" transform="rotate(0 663.0 368.0)" text-anchor="middle" dominant-baseline="central" style="font-size:9.5px;fill:#222;stroke:#fff;stroke-width:2.2px;paint-order:stroke">300</text>
<text x="733.0" y="264.0" transform="rotate(0 733.0 264.0)" text-anchor="middle" dominant-baseline="central" style="font-size:10.5px;font-style:italic;fill:#222;stroke:#fff;stroke-width:2.2px;paint-order:stroke">Столовая</text>
<text x="832.0" y="287.0" transform="rotate(0 832.0 287.0)" text-anchor="middle" dominant-baseline="central" style="font-size:10.5px;font-style:italic;fill:#222;stroke:#fff;stroke-width:2.2px;paint-order:stroke">Кавказ</text>
<circle cx="791" cy="57" r="7.8" fill="#fff" stroke="#8a8ba3" stroke-width="1"/>
<text x="791" y="57.5" text-anchor="middle" dominant-baseline="central" style="font-size:10.5px;font-weight:bold;fill:#4a4a4a">P</text>
<circle cx="858" cy="161" r="7.8" fill="#fff" stroke="#8a8ba3" stroke-width="1"/>
<text x="858" y="161.5" text-anchor="middle" dominant-baseline="central" style="font-size:10.5px;font-weight:bold;fill:#4a4a4a">P</text>
<circle cx="786" cy="200" r="7.8" fill="#fff" stroke="#8a8ba3" stroke-width="1"/>
<text x="786" y="200.5" text-anchor="middle" dominant-baseline="central" style="font-size:10.5px;font-weight:bold;fill:#4a4a4a">P</text>
<circle cx="981" cy="227" r="7.8" fill="#fff" stroke="#8a8ba3" stroke-width="1"/>
<text x="981" y="227.5" text-anchor="middle" dominant-baseline="central" style="font-size:10.5px;font-weight:bold;fill:#4a4a4a">P</text>
<circle cx="885" cy="338" r="7.8" fill="#fff" stroke="#8a8ba3" stroke-width="1"/>
<text x="885" y="338.5" text-anchor="middle" dominant-baseline="central" style="font-size:10.5px;font-weight:bold;fill:#4a4a4a">P</text>
<circle cx="1124" cy="349" r="7.8" fill="#fff" stroke="#8a8ba3" stroke-width="1"/>
<text x="1124" y="349.5" text-anchor="middle" dominant-baseline="central" style="font-size:10.5px;font-weight:bold;fill:#4a4a4a">P</text>
<circle cx="1140" cy="238" r="7.8" fill="#fff" stroke="#8a8ba3" stroke-width="1"/>
<text x="1140" y="238.5" text-anchor="middle" dominant-baseline="central" style="font-size:10.5px;font-weight:bold;fill:#4a4a4a">P</text>
<circle cx="759" cy="223" r="7" fill="#fff" stroke="#3b6fc7" stroke-width="1.2"/><text x="759" y="223.5" text-anchor="middle" dominant-baseline="central" style="font-size:11px;font-weight:bold;fill:#2d5fb9">$</text>
<circle cx="733" cy="250" r="7" fill="#fff" stroke="#777" stroke-width="1"/><path d="M729.5,248 h6 v2 a3,3 0 0 1 -6,0 z" fill="#444"/>
<circle cx="832" cy="274" r="7" fill="#fff" stroke="#777" stroke-width="1"/><path d="M828,271 v6 M828,275 h8 v2 M830.5,272.5 h4.5 v2.5" stroke="#333" stroke-width="1.2" fill="none"/>
<circle cx="569" cy="189.5" r="10" fill="rgba(0,0,0,0.12)" filter="url(#blur)"/>
<circle cx="569" cy="188" r="8.5" fill="#29b6f6" stroke="#fff" stroke-width="1.6"/>
<circle cx="786" cy="112.5" r="10" fill="rgba(0,0,0,0.12)" filter="url(#blur)"/>
<circle cx="786" cy="111" r="8.5" fill="#29b6f6" stroke="#fff" stroke-width="1.6"/>
<circle cx="813" cy="212.5" r="10" fill="rgba(0,0,0,0.12)" filter="url(#blur)"/>
<circle cx="813" cy="211" r="8.5" fill="#29b6f6" stroke="#fff" stroke-width="1.6"/>
<circle cx="1128" cy="65.5" r="10" fill="rgba(0,0,0,0.12)" filter="url(#blur)"/>
<circle cx="1128" cy="64" r="8.5" fill="#29b6f6" stroke="#fff" stroke-width="1.6"/>
</svg>
  <div class="mbtn" style="left:10px;top:9px;height:31px;background:#f4f4f4;border-bottom:1px solid #e3e3e3;border-radius:4px 4px 0 0;font-size:22px;font-weight:bold;color:#b9b9b9;text-align:center;line-height:30px">+</div>
  <div class="mbtn" style="left:10px;top:40px;height:31px;border-radius:0 0 4px 4px"><div class="abs" style="left:8px;top:14px;width:14px;height:2.5px;background:#111"></div></div>
  <div class="mbtn" style="left:10px;top:81px;width:35px;height:35px;border-radius:4px">
    <svg class="abs" style="left:8px;top:8px" width="19" height="19" viewBox="0 0 19 19" fill="none" stroke="#111" stroke-width="1.8">
      <path d="M1.5 6.5 V1.5 H6.5 M1.5 1.5 L7 7 M12.5 1.5 H17.5 V6.5 M17.5 1.5 L12 7 M1.5 12.5 V17.5 H6.5 M1.5 17.5 L7 12 M17.5 12.5 V17.5 H12.5 M17.5 17.5 L12 12"/></svg>
  </div>
  <div class="mbtn" style="left:1094px;top:9px;width:36px;height:35px;border-radius:4px">
    <svg class="abs" style="left:5px;top:5px" width="26" height="26" viewBox="0 0 26 26">
      <path d="M13 14 L24 19 L13 24 L2 19 Z" fill="#9e9e9e" stroke="#fff" stroke-width="0.8"/>
      <path d="M13 9 L24 14 L13 19 L2 14 Z" fill="#9e9e9e" stroke="#fff" stroke-width="0.8"/>
      <path d="M13 3 L24 8 L13 13 L2 8 Z" fill="#c4c4c4" stroke="#fff" stroke-width="0.8"/>
    </svg>
  </div>
  <div class="hint">Выделить заявку — Ctrl + щелчок; выделить несколько — зажать Shift и потянуть</div>
</div>

</body></html>
